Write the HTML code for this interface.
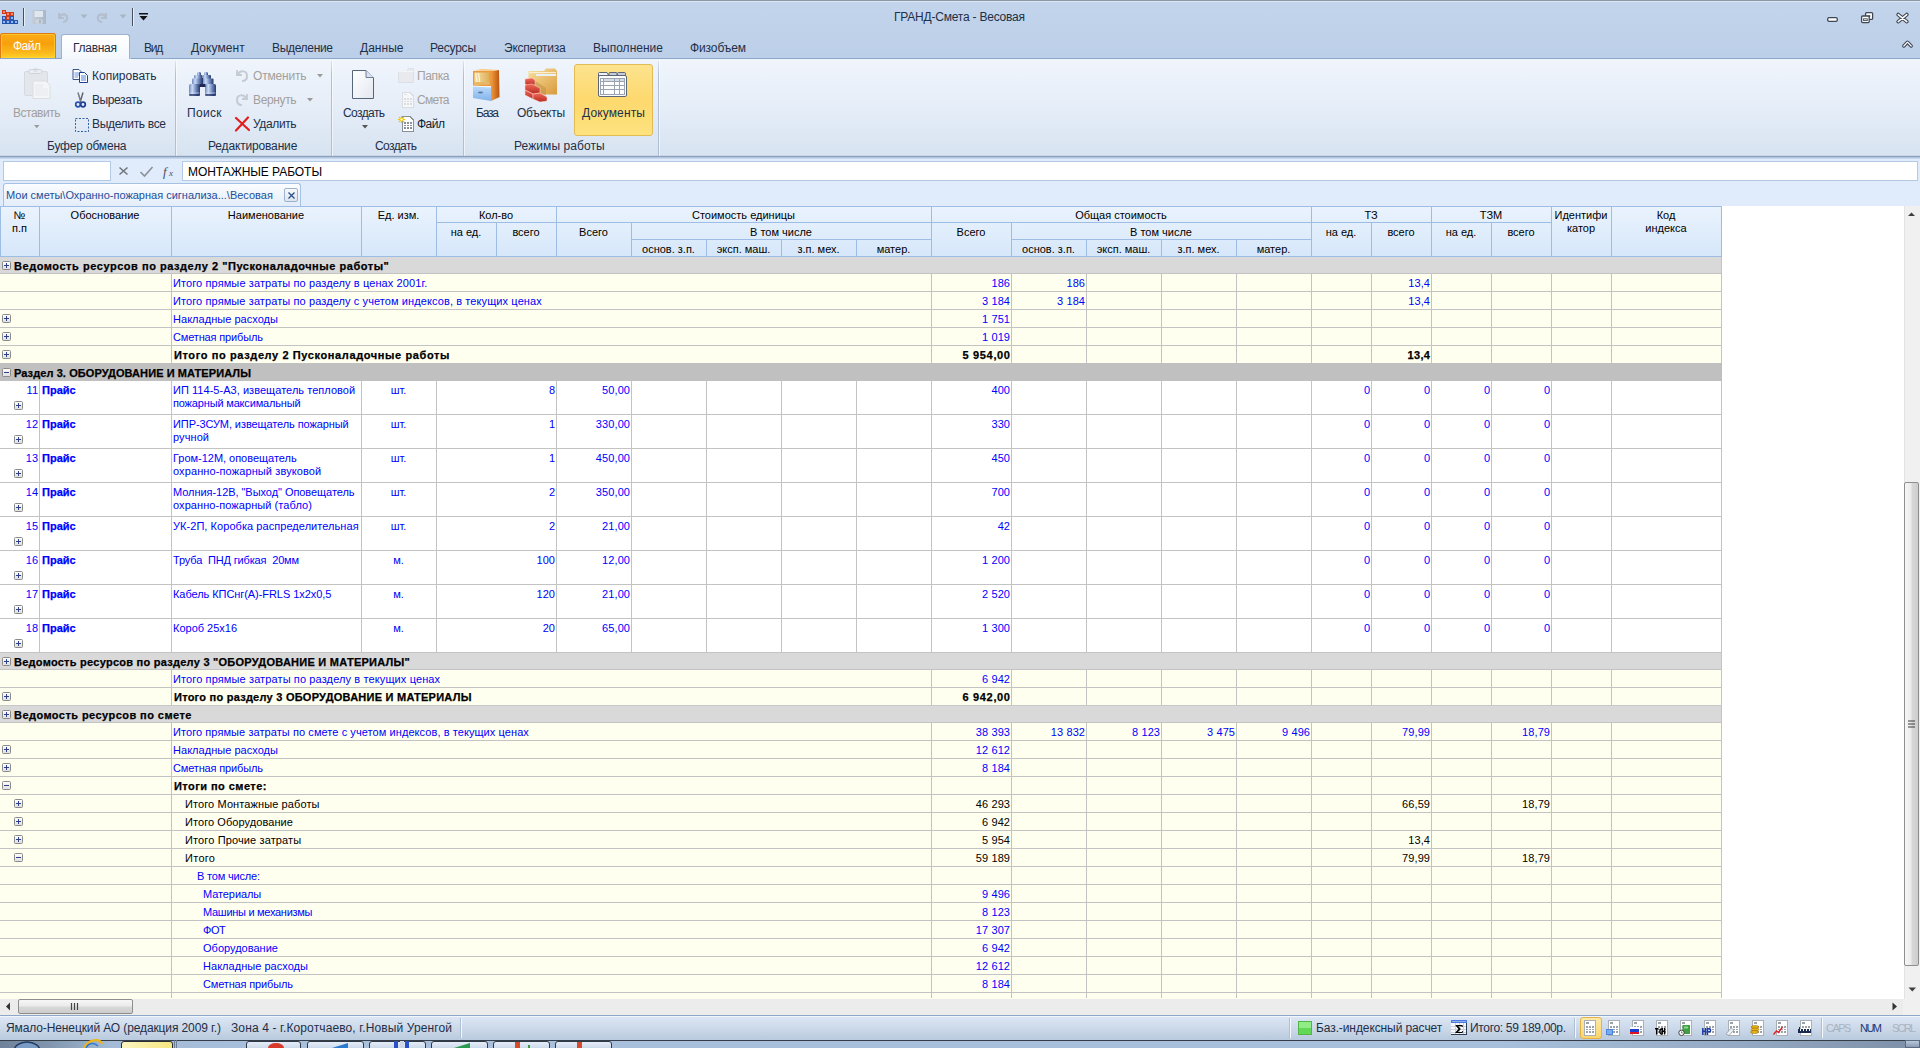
<!DOCTYPE html>
<html><head><meta charset="utf-8"><title>ГРАНД-Смета - Весовая</title>
<style>
html,body{margin:0;padding:0;}
body{width:1920px;height:1048px;position:relative;overflow:hidden;background:#fff;font-family:"Liberation Sans",sans-serif;}
.t{position:absolute;white-space:pre;}
.b{position:absolute;box-sizing:border-box;}
svg.b{overflow:visible;}
</style></head><body>
<div class="b" style="left:0px;top:0px;width:1920px;height:59px;background:linear-gradient(#c3d5ec,#bccfe8);"></div>
<div class="b" style="left:0px;top:0px;width:1920px;height:1px;background:#8d98a6;"></div>
<div class="b" style="left:0px;top:1px;width:1920px;height:1px;background:#dbe6f3;"></div>
<svg class="b" style="left:2px;top:10px" width="17" height="15" viewBox="0 0 17 15"><g shape-rendering="crispEdges"><rect x="0" y="0" width="4" height="4" fill="#d4381a"/><rect x="0.6" y="0.6" width="2.6" height="2.4" fill="#ff8a6a"/><rect x="4" y="2" width="4" height="4" fill="#d4381a"/><rect x="4.6" y="2.6" width="2.6" height="2.4" fill="#ff8a6a"/><rect x="8" y="2" width="4" height="4" fill="#d4381a"/><rect x="8.6" y="2.6" width="2.6" height="2.4" fill="#ff8a6a"/><rect x="4" y="6" width="4" height="4" fill="#d4381a"/><rect x="4.6" y="6.6" width="2.6" height="2.4" fill="#ff8a6a"/><rect x="0" y="6" width="4" height="4" fill="#2a58b0"/><rect x="0.6" y="6.6" width="2.6" height="2.4" fill="#8ab8f8"/><rect x="8" y="6" width="4" height="4" fill="#2a58b0"/><rect x="8.6" y="6.6" width="2.6" height="2.4" fill="#8ab8f8"/><rect x="0" y="10" width="4" height="4" fill="#2a58b0"/><rect x="0.6" y="10.6" width="2.6" height="2.4" fill="#8ab8f8"/><rect x="4" y="10" width="4" height="4" fill="#2a58b0"/><rect x="4.6" y="10.6" width="2.6" height="2.4" fill="#8ab8f8"/><rect x="8" y="10" width="4" height="4" fill="#2a58b0"/><rect x="8.6" y="10.6" width="2.6" height="2.4" fill="#8ab8f8"/><rect x="12" y="10" width="4" height="4" fill="#2a58b0"/><rect x="12.6" y="10.6" width="2.6" height="2.4" fill="#8ab8f8"/><rect x="0" y="13" width="16" height="1.2" fill="#2350a8"/></g></svg>
<div class="b" style="left:23px;top:8px;width:1px;height:18px;background:#4a505a;"></div>
<div class="b" style="left:24px;top:8px;width:1px;height:18px;background:#e8f0f8;"></div>
<svg class="b" style="left:32px;top:10px" width="14" height="14" viewBox="0 0 14 14"><defs><linearGradient id="fl" x1="0" x2="1"><stop offset="0" stop-color="#c3ceda"/><stop offset="1" stop-color="#a9b6c5"/></linearGradient></defs><rect x="0" y="0" width="14" height="14" rx="1" fill="url(#fl)"/><rect x="2.5" y="1" width="8.5" height="6" fill="#dfe7f1"/><rect x="3.5" y="9.5" width="7" height="4" fill="#cdd6e0"/><rect x="7" y="10" width="2" height="3" fill="#a9b6c5"/></svg>
<svg class="b" style="left:56px;top:10px" width="13" height="13" viewBox="0 0 13 13"><path d="M3 3 L3 8 L8 8" fill="none" stroke="#b3bfcc" stroke-width="2"/><path d="M3 8 C5 3, 12 3, 11 9 C10 12, 8 12, 7 12" fill="none" stroke="#b3bfcc" stroke-width="2.2"/></svg>
<svg class="b" style="left:80px;top:14px" width="8" height="5" viewBox="0 0 8 5"><path d="M0.5 0.5 L7.5 0.5 L4 4.5 Z" fill="#a9b6c4"/></svg>
<svg class="b" style="left:96px;top:10px" width="13" height="13" viewBox="0 0 13 13"><path d="M10 3 L10 8 L5 8" fill="none" stroke="#b3bfcc" stroke-width="2"/><path d="M10 8 C8 3, 1 3, 2 9 C3 12, 5 12, 6 12" fill="none" stroke="#b3bfcc" stroke-width="2.2"/></svg>
<svg class="b" style="left:119px;top:14px" width="8" height="5" viewBox="0 0 8 5"><path d="M0.5 0.5 L7.5 0.5 L4 4.5 Z" fill="#a9b6c4"/></svg>
<div class="b" style="left:132px;top:8px;width:1px;height:18px;background:#4a505a;"></div>
<div class="b" style="left:133px;top:8px;width:1px;height:18px;background:#e8f0f8;"></div>
<svg class="b" style="left:139px;top:13px" width="9" height="8" viewBox="0 0 9 8"><rect x="0" y="0" width="9" height="1.5" fill="#111"/><path d="M0.5 3 L8.5 3 L4.5 7.5 Z" fill="#111"/></svg>
<div class="t " style="left:894px;top:10px;font-size:12px;line-height:14px;color:#1e2f48;letter-spacing:-0.214px;">ГРАНД-Смета - Весовая</div>
<svg class="b" style="left:1826px;top:16px" width="13" height="7" viewBox="0 0 13 7"><rect x="1.7" y="1.6" width="9.6" height="3.8" rx="1.4" fill="#fff" stroke="#3f4654" stroke-width="1.3"/></svg>
<svg class="b" style="left:1860px;top:11px" width="15" height="13" viewBox="0 0 15 13"><rect x="5.6" y="1.6" width="7" height="6.8" rx="1" fill="#fff" stroke="#3f4654" stroke-width="1.3"/><rect x="8.2" y="4.2" width="2" height="1.8" fill="#3f4654"/><rect x="1.6" y="5" width="7.6" height="6.6" rx="1" fill="#fff" stroke="#3f4654" stroke-width="1.3"/><rect x="3.6" y="7.8" width="3.6" height="1.8" fill="none" stroke="#3f4654" stroke-width="0.9"/></svg>
<svg class="b" style="left:1895px;top:12px" width="15" height="12" viewBox="0 0 15 12"><path d="M3.2 2.6 L11.8 9.6 M11.8 2.6 L3.2 9.6" stroke="#3f4654" stroke-width="3.8" stroke-linecap="round"/><path d="M3.2 2.6 L11.8 9.6 M11.8 2.6 L3.2 9.6" stroke="#fff" stroke-width="1.5" stroke-linecap="round"/></svg>
<svg class="b" style="left:1902px;top:40px" width="11" height="8" viewBox="0 0 11 8"><path d="M1.8 6 L5.5 2.2 L9.2 6" fill="none" stroke="#3f4654" stroke-width="3.4" stroke-linecap="round" stroke-linejoin="round"/><path d="M1.8 6 L5.5 2.2 L9.2 6" fill="none" stroke="#fff" stroke-width="1.2" stroke-linecap="round" stroke-linejoin="round"/></svg>
<div class="b" style="left:0;top:33px;width:56px;height:26px;border-radius:3px 3px 0 0;background:linear-gradient(#fbae18,#f7a00c 40%,#fab81c 75%,#fdd628);box-shadow:inset 0 0 0 1px #e27a14, inset 0 0 0 2px rgba(255,214,60,0.6);"></div>
<div class="t " style="left:13px;top:39px;font-size:12px;line-height:14px;color:#fff;letter-spacing:-0.5px;">Файл</div>
<div class="b" style="left:61px;top:34px;width:69px;height:26px;border-radius:3px 3px 0 0;background:linear-gradient(#ffffff,#f3f7fc);border:1px solid #9db3cd;border-bottom:none;"></div>
<div class="b" style="left:0px;top:58px;width:61px;height:1px;background:#8ba6c6;"></div>
<div class="b" style="left:131px;top:58px;width:1789px;height:1px;background:#8ba6c6;"></div>
<div class="t " style="left:73px;top:41px;font-size:12px;line-height:14px;color:#1e2f48;letter-spacing:-0.279px;">Главная</div>
<div class="t " style="left:144px;top:41px;font-size:12px;line-height:14px;color:#1e2f48;letter-spacing:-1.227px;">Вид</div>
<div class="t " style="left:191px;top:41px;font-size:12px;line-height:14px;color:#1e2f48;letter-spacing:0.074px;">Документ</div>
<div class="t " style="left:272px;top:41px;font-size:12px;line-height:14px;color:#1e2f48;letter-spacing:-0.322px;">Выделение</div>
<div class="t " style="left:360px;top:41px;font-size:12px;line-height:14px;color:#1e2f48;letter-spacing:0.031px;">Данные</div>
<div class="t " style="left:430px;top:41px;font-size:12px;line-height:14px;color:#1e2f48;letter-spacing:-0.216px;">Ресурсы</div>
<div class="t " style="left:504px;top:41px;font-size:12px;line-height:14px;color:#1e2f48;letter-spacing:-0.247px;">Экспертиза</div>
<div class="t " style="left:593px;top:41px;font-size:12px;line-height:14px;color:#1e2f48;letter-spacing:0.019px;">Выполнение</div>
<div class="t " style="left:690px;top:41px;font-size:12px;line-height:14px;color:#1e2f48;letter-spacing:-0.109px;">Физобъем</div>
<div class="b" style="left:0px;top:59px;width:1920px;height:97px;background:linear-gradient(#f0f5fc,#e8eff9 40%,#d7e3f1);"></div>
<div class="b" style="left:0px;top:155px;width:1920px;height:1px;background:#c9d6e6;"></div>
<div class="b" style="left:0px;top:156px;width:1920px;height:1px;background:#8aa0bc;"></div>
<div class="b" style="left:175px;top:61px;width:1px;height:95px;background:linear-gradient(rgba(170,190,215,0.3),#aebfd6 15%,#aebfd6 100%);"></div>
<div class="b" style="left:176px;top:61px;width:1px;height:95px;background:rgba(255,255,255,0.55);"></div>
<div class="b" style="left:331px;top:61px;width:1px;height:95px;background:linear-gradient(rgba(170,190,215,0.3),#aebfd6 15%,#aebfd6 100%);"></div>
<div class="b" style="left:332px;top:61px;width:1px;height:95px;background:rgba(255,255,255,0.55);"></div>
<div class="b" style="left:463px;top:61px;width:1px;height:95px;background:linear-gradient(rgba(170,190,215,0.3),#aebfd6 15%,#aebfd6 100%);"></div>
<div class="b" style="left:464px;top:61px;width:1px;height:95px;background:rgba(255,255,255,0.55);"></div>
<div class="b" style="left:658px;top:61px;width:1px;height:95px;background:linear-gradient(rgba(170,190,215,0.3),#aebfd6 15%,#aebfd6 100%);"></div>
<div class="b" style="left:659px;top:61px;width:1px;height:95px;background:rgba(255,255,255,0.55);"></div>
<svg class="b" style="left:23px;top:68px" width="28" height="32" viewBox="0 0 28 32"><rect x="1.5" y="3.5" width="23" height="24" rx="1.5" fill="#e3e6eb" stroke="#d6dae0"/><rect x="6" y="1.5" width="13" height="4" rx="1.5" fill="#eceef2" stroke="#cfd4da"/><circle cx="12.5" cy="2" r="1.5" fill="none" stroke="#cfd4da"/><path d="M10 13 H23 L27 17 V30.5 H10 Z" fill="#f4f5f7" stroke="#dadde2"/><path d="M12 17 H20 M12 19 H20 M12 21 H25 M12 23 H25 M12 25 H25 M12 27 H25" stroke="#e2e5ea" stroke-width="0.8"/></svg>
<div class="t " style="left:13px;top:106px;font-size:12px;line-height:14px;color:#a39f9b;letter-spacing:-0.48px;">Вставить</div>
<svg class="b" style="left:34px;top:125px" width="6" height="4" viewBox="0 0 6 4"><path d="M0 0 L5.5 0 L2.75 3.2 Z" fill="#9a9a9a"/></svg>
<svg class="b" style="left:72px;top:69px" width="17" height="14" viewBox="0 0 17 14"><path d="M1 0.5 H7 L9.5 3 V10.5 H1 Z" fill="#fff" stroke="#3b5586"/><path d="M2.5 4 H7.5 M2.5 6 H7.5 M2.5 8 H6" stroke="#5a8ad8" stroke-width="0.9"/><path d="M7.5 3.5 H12.5 L15.5 6.5 V13.5 H7.5 Z" fill="#fff" stroke="#1c3f94"/><path d="M9 7 H14 M9 9 H14 M9 11 H14" stroke="#3a74d8" stroke-width="0.9"/></svg>
<div class="t " style="left:92px;top:69px;font-size:12px;line-height:14px;color:#1e2f48;letter-spacing:-0.01px;">Копировать</div>
<svg class="b" style="left:75px;top:92px" width="11" height="16" viewBox="0 0 11 16"><path d="M3 0.5 L5.8 10 M8 0.5 L5.2 10" stroke="#5c6168" stroke-width="1.4"/><path d="M3.2 1 L5.5 9" stroke="#a8adb4" stroke-width="0.5"/><circle cx="3" cy="12.5" r="2.3" fill="none" stroke="#2a50b8" stroke-width="1.7"/><circle cx="8" cy="12.5" r="2.3" fill="none" stroke="#1f3f98" stroke-width="1.7"/></svg>
<div class="t " style="left:92px;top:93px;font-size:12px;line-height:14px;color:#1e2f48;letter-spacing:-0.408px;">Вырезать</div>
<svg class="b" style="left:75px;top:118px" width="14" height="14" viewBox="0 0 14 14"><rect x="0.5" y="0.5" width="13" height="13" fill="none" stroke="#3060a8" stroke-dasharray="2,1.5"/></svg>
<div class="t " style="left:92px;top:117px;font-size:12px;line-height:14px;color:#1e2f48;letter-spacing:-0.327px;">Выделить все</div>
<div class="t " style="left:47px;top:139px;font-size:12px;line-height:14px;color:#1e2f48;letter-spacing:-0.183px;">Буфер обмена</div>
<svg class="b" style="left:188px;top:71px" width="30" height="27" viewBox="0 0 30 27"><defs><linearGradient id="bn" x1="0" x2="1"><stop offset="0" stop-color="#6f86b6"/><stop offset="0.3" stop-color="#c9daf8"/><stop offset="0.65" stop-color="#6f87bb"/><stop offset="1" stop-color="#26386a"/></linearGradient></defs><g fill="url(#bn)"><rect x="9" y="1" width="4" height="4" rx="1.5"/><rect x="16" y="1" width="4" height="4" rx="1.5"/><rect x="6" y="4" width="8.5" height="4" rx="1"/><rect x="14.5" y="4" width="8.5" height="4" rx="1"/><rect x="4" y="7.4" width="10.5" height="6" rx="1"/><rect x="14.5" y="7.4" width="11" height="6" rx="1"/><rect x="1" y="13" width="11" height="12" rx="1.5"/><rect x="17" y="13" width="11" height="12" rx="1.5"/></g><rect x="11.5" y="13" width="6" height="3" fill="#1c2a55"/><rect x="14" y="7" width="1" height="6" fill="#2c3e70"/><rect x="1.5" y="21.5" width="10" height="1" fill="#d8e4fa" opacity="0.6"/><rect x="17.5" y="21.5" width="10" height="1" fill="#d8e4fa" opacity="0.6"/><rect x="1.5" y="23" width="10" height="2" fill="#1f2f60" opacity="0.7"/><rect x="17.5" y="23" width="10" height="2" fill="#1f2f60" opacity="0.7"/></svg>
<div class="t " style="left:187px;top:106px;font-size:12px;line-height:14px;color:#1e2f48;letter-spacing:0.338px;">Поиск</div>
<svg class="b" style="left:235px;top:68px" width="14" height="14" viewBox="0 0 14 14"><path d="M2 2 V7 H7" fill="none" stroke="#c5cbd3" stroke-width="1.8"/><path d="M2.5 7 C5 2, 12 2, 12 8 C12 11, 10 13, 7 13" fill="none" stroke="#c5cbd3" stroke-width="2"/></svg>
<div class="t " style="left:253px;top:69px;font-size:12px;line-height:14px;color:#a39f9b;letter-spacing:-0.175px;">Отменить</div>
<svg class="b" style="left:317px;top:74px" width="6" height="4" viewBox="0 0 6 4"><path d="M0 0 L6 0 L3 3.5 Z" fill="#9a9a9a"/></svg>
<svg class="b" style="left:235px;top:92px" width="14" height="14" viewBox="0 0 14 14"><path d="M12 2 V7 H7" fill="none" stroke="#c5cbd3" stroke-width="1.8"/><path d="M11.5 7 C9 2, 2 2, 2 8 C2 11, 4 13, 7 13" fill="none" stroke="#c5cbd3" stroke-width="2"/></svg>
<div class="t " style="left:253px;top:93px;font-size:12px;line-height:14px;color:#a39f9b;letter-spacing:-0.353px;">Вернуть</div>
<svg class="b" style="left:307px;top:98px" width="6" height="4" viewBox="0 0 6 4"><path d="M0 0 L6 0 L3 3.5 Z" fill="#9a9a9a"/></svg>
<svg class="b" style="left:234px;top:116px" width="17" height="16" viewBox="0 0 17 16"><path d="M2 2 L15 14 M14 1.5 L2 14.5" stroke="#e02020" stroke-width="2.2" stroke-linecap="round"/></svg>
<div class="t " style="left:253px;top:117px;font-size:12px;line-height:14px;color:#1e2f48;letter-spacing:-0.369px;">Удалить</div>
<div class="t " style="left:208px;top:139px;font-size:12px;line-height:14px;color:#1e2f48;letter-spacing:-0.161px;">Редактирование</div>
<svg class="b" style="left:351px;top:69px" width="24" height="31" viewBox="0 0 24 31"><defs><linearGradient id="pg" x1="0" y1="0" x2="1" y2="1"><stop offset="0" stop-color="#ffffff"/><stop offset="1" stop-color="#e3e8f0"/></linearGradient></defs><path d="M1.5 1.5 H15 L22.5 9 V29.5 H1.5 Z" fill="url(#pg)" stroke="#56657a" stroke-width="1"/><path d="M15 1.5 V8.5 H22.5" fill="#d8e2f2" stroke="#56657a" stroke-width="0.8"/></svg>
<div class="t " style="left:343px;top:106px;font-size:12px;line-height:14px;color:#1e2f48;letter-spacing:-0.582px;">Создать</div>
<svg class="b" style="left:362px;top:125px" width="6" height="4" viewBox="0 0 6 4"><path d="M0 0 L6 0 L3 3.5 Z" fill="#555"/></svg>
<svg class="b" style="left:398px;top:68px" width="16" height="15" viewBox="0 0 16 15"><path d="M0.5 3.5 H9 L10.5 0.5 H15.5 V14.5 H0.5 Z" fill="#e8eaee" stroke="#dcdfe4"/><path d="M0.5 3.5 H15.5" stroke="#f4f5f7"/></svg>
<div class="t " style="left:417px;top:69px;font-size:12px;line-height:14px;color:#a39f9b;letter-spacing:-0.371px;">Папка</div>
<svg class="b" style="left:402px;top:92px" width="12" height="16" viewBox="0 0 12 16"><g shape-rendering="crispEdges"><path d="M0.5 0.5 H8 L11.5 4 V15.5 H0.5 Z" fill="#f6f7f9" stroke="#d9dce1"/><rect x="2" y="2" width="3" height="1" fill="#dcdfe4"/><rect x="2" y="6" width="8" height="7" fill="#d9dce1"/><rect x="4" y="6" width="1" height="7" fill="#f6f7f9"/><rect x="7" y="6" width="1" height="7" fill="#f6f7f9"/><rect x="2" y="8" width="8" height="1" fill="#f6f7f9"/><rect x="2" y="10" width="8" height="1" fill="#f6f7f9"/></g></svg>
<div class="t " style="left:417px;top:93px;font-size:12px;line-height:14px;color:#a39f9b;letter-spacing:-0.684px;">Смета</div>
<svg class="b" style="left:398px;top:116px" width="17" height="17" viewBox="0 0 17 17"><g shape-rendering="crispEdges"><path d="M4.5 0.5 H12 L15.5 4 V15.5 H4.5 Z" fill="#fff" stroke="#8a9099"/><rect x="6" y="6" width="8" height="7" fill="#8a9099"/><rect x="8" y="6" width="1" height="7" fill="#fff"/><rect x="11" y="6" width="1" height="7" fill="#fff"/><rect x="6" y="8" width="8" height="1" fill="#fff"/><rect x="6" y="10" width="8" height="1" fill="#fff"/></g><path d="M3.5 0 V7 M0 3.5 H7 M1 1 L6 6 M6 1 L1 6" stroke="#f2c200" stroke-width="1.1"/><circle cx="3.5" cy="3.5" r="1.2" fill="#fff8c0"/></svg>
<div class="t " style="left:417px;top:117px;font-size:12px;line-height:14px;color:#101c30;letter-spacing:-0.5px;">Файл</div>
<div class="t " style="left:375px;top:139px;font-size:12px;line-height:14px;color:#1e2f48;letter-spacing:-0.582px;">Создать</div>
<svg class="b" style="left:472px;top:68px" width="32" height="34" viewBox="0 0 32 34"><defs><linearGradient id="or" x1="0" x2="1"><stop offset="0" stop-color="#f29a3c"/><stop offset="1" stop-color="#b9560e"/></linearGradient><linearGradient id="bl" x1="0" y1="0" x2="0" y2="1"><stop offset="0" stop-color="#b9dbfb"/><stop offset="1" stop-color="#82b2ea"/></linearGradient><linearGradient id="pp" x1="0" x2="1"><stop offset="0" stop-color="#f7e3a8"/><stop offset="1" stop-color="#dcae5a"/></linearGradient></defs><path d="M19 3 L27 2 L27.5 29 L19 33 Z" fill="url(#or)"/><path d="M27 29.5 L31 28 L19 33.5 Z" fill="#9aa6b8" opacity="0.5"/><path d="M1 2.5 L19 3 L27 2 L10 1 Z" fill="#f8c880"/><rect x="1" y="3" width="18" height="15" fill="#ec9a3e"/><rect x="2.5" y="4.5" width="15" height="12" fill="url(#pp)"/><path d="M3.5 5 L5.5 16 M6.5 5 L8 16" stroke="#fff6d8" stroke-width="1.2"/><rect x="2.5" y="14" width="15" height="2.5" fill="#e8b868"/><path d="M1 18 L19 19 L19 33 L1 30 Z" fill="url(#bl)"/><path d="M1 18 L19 19" stroke="#fff" stroke-width="0.8"/><ellipse cx="8.5" cy="24.5" rx="2.6" ry="1.1" fill="#5c7aa8"/></svg>
<div class="t " style="left:476px;top:106px;font-size:12px;line-height:14px;color:#1e2f48;letter-spacing:-1.193px;">База</div>
<svg class="b" style="left:524px;top:68px" width="34" height="34" viewBox="0 0 34 34"><defs><linearGradient id="fd" x1="0" y1="0" x2="1" y2="1"><stop offset="0" stop-color="#f9e1a0"/><stop offset="1" stop-color="#d99a3c"/></linearGradient><linearGradient id="brk" x1="0" y1="0" x2="0" y2="1"><stop offset="0" stop-color="#f06a5a"/><stop offset="1" stop-color="#b82a22"/></linearGradient></defs><path d="M4.5 3 H20 L22 0.5 H31 L33 3 V26.5 H4.5 Z" fill="url(#fd)"/><path d="M5.5 4 H32 V5.2 H5.5 Z" fill="#fff8e4" opacity="0.8"/><path d="M12 6 H32 V8 H12 Z" fill="#e8f0f8"/><path d="M10 12 L22 20 L22 28 L10 22 Z" fill="#b07830" opacity="0.35"/><g fill="url(#brk)" stroke="#ffd8d0" stroke-width="0.5"><path d="M1 11 L8 10 L11 12 L11 17 L4 18 L1 16 Z"/><path d="M1 17 L8 16 L16 20 L16 25 L9 26 L1 22 Z"/><path d="M1 22 L9 26 L9 31 L1 27 Z"/><path d="M9 26 L16 25 L23 29 L23 33 L16 34 L9 31 Z"/></g></svg>
<div class="t " style="left:517px;top:106px;font-size:12px;line-height:14px;color:#1e2f48;letter-spacing:-0.217px;">Объекты</div>
<div class="b" style="left:574px;top:64px;width:79px;height:72px;border:1px solid #e3bb55;border-radius:3px;background:linear-gradient(#fde38e,#fdd96e 50%,#fde27e);"></div>
<svg class="b" style="left:597px;top:71px" width="32" height="28" viewBox="0 0 32 28"><path d="M1.5 6 V2.5 Q1.5 1.5 2.5 1.5 H10 L12 5 Z" fill="#eef1f5" stroke="#5c6678"/><rect x="12" y="1.5" width="8" height="3.5" rx="1" fill="#c5ccd8" stroke="#5c6678"/><rect x="20.5" y="1.5" width="8" height="3.5" rx="1" fill="#c5ccd8" stroke="#5c6678"/><rect x="1.5" y="4.5" width="28" height="21" rx="1.5" fill="#fdfdfe" stroke="#5c6678"/><g shape-rendering="crispEdges" stroke="#9aa3b0" fill="none"><rect x="3.5" y="7.5" width="24" height="16"/><path d="M3.5 10.5 H27.5 M3.5 14.5 H27.5 M3.5 18.5 H27.5 M6.5 7.5 V23.5 M17.5 7.5 V23.5 M22.5 7.5 V23.5"/></g><rect x="7" y="8" width="10" height="2" fill="#d6dce6"/><rect x="18" y="8" width="4" height="2" fill="#d6dce6"/><rect x="23" y="8" width="4" height="2" fill="#d6dce6"/></svg>
<div class="t " style="left:582px;top:106px;font-size:12px;line-height:14px;color:#1e2f48;letter-spacing:0.13px;">Документы</div>
<div class="t " style="left:514px;top:139px;font-size:12px;line-height:14px;color:#1e2f48;letter-spacing:0.076px;">Режимы работы</div>
<div class="b" style="left:0px;top:157px;width:1920px;height:26px;background:#e0ecfb;"></div>
<div class="b" style="left:0px;top:157px;width:1920px;height:1px;background:#b3c6dd;"></div>
<div class="b" style="left:0px;top:158px;width:1920px;height:1px;background:#c8d8ec;"></div>
<div class="b" style="left:3px;top:161px;width:108px;height:20px;background:#fff;border:1px solid #b3c9e4;"></div>
<svg class="b" style="left:118px;top:166px" width="11" height="10" viewBox="0 0 11 10"><path d="M1.5 1.5 L9.5 8.5 M9.5 1.5 L1.5 8.5" stroke="#6d737b" stroke-width="1.5"/></svg>
<svg class="b" style="left:139px;top:165px" width="15" height="13" viewBox="0 0 15 13"><path d="M1.5 7 L5.5 11 L13.5 2" fill="none" stroke="#8c9198" stroke-width="1.6"/></svg>
<div class="t " style="left:163px;top:165px;font-size:13px;line-height:14px;color:#4a5058;font-family:'Liberation Serif',serif;font-style:italic;">f</div>
<div class="t " style="left:169px;top:167px;font-size:9px;line-height:13px;color:#4a5058;font-family:'Liberation Serif',serif;font-style:italic;">x</div>
<div class="b" style="left:182px;top:161px;width:1736px;height:20px;background:#fff;border:1px solid #b3c9e4;"></div>
<div class="t " style="left:188px;top:165px;font-size:12px;line-height:14px;color:#000;letter-spacing:-0.057px;">МОНТАЖНЫЕ РАБОТЫ</div>
<div class="b" style="left:0px;top:183px;width:1920px;height:23px;background:#e0ecfb;"></div>
<div class="b" style="left:3px;top:183px;width:298px;height:23px;border:1px solid #a5c1e3;border-bottom:none;border-radius:3px 3px 0 0;background:linear-gradient(#fbfdff,#e3edf9);"></div>
<div class="t " style="left:6px;top:189px;font-size:11px;line-height:13px;color:#1d4f9a;letter-spacing:-0.004px;">Мои сметы\Охранно-пожарная сигнализа...\Весовая</div>
<div class="b" style="left:284px;top:188px;width:14px;height:14px;border:1px solid #9cb2cd;border-radius:2px;background:linear-gradient(#f6f9fd,#dbe5f1);"></div>
<svg class="b" style="left:286px;top:190px" width="11" height="11" viewBox="0 0 11 11"><path d="M2.5 2.5 L8.5 8.5 M8.5 2.5 L2.5 8.5" stroke="#2b4f86" stroke-width="1.3"/></svg>
<div class="b" style="left:0px;top:206px;width:1904px;height:793px;background:#fff;"></div>
<div class="b" style="left:0px;top:206px;width:1722px;height:51px;background:linear-gradient(#eaf3fd,#d6e7fa);"></div>
<div class="b" style="left:0px;top:206px;width:1722px;height:1px;background:#9ebde4;"></div>
<div class="b" style="left:0px;top:256px;width:1722px;height:1px;background:#9ebde4;"></div>
<div class="b" style="left:0px;top:206px;width:1px;height:51px;background:#9ebde4;"></div>
<div class="b" style="left:39px;top:206px;width:1px;height:51px;background:#9ebde4;"></div>
<div class="b" style="left:171px;top:206px;width:1px;height:51px;background:#9ebde4;"></div>
<div class="b" style="left:361px;top:206px;width:1px;height:51px;background:#9ebde4;"></div>
<div class="b" style="left:436px;top:206px;width:1px;height:51px;background:#9ebde4;"></div>
<div class="b" style="left:556px;top:206px;width:1px;height:51px;background:#9ebde4;"></div>
<div class="b" style="left:931px;top:206px;width:1px;height:51px;background:#9ebde4;"></div>
<div class="b" style="left:1311px;top:206px;width:1px;height:51px;background:#9ebde4;"></div>
<div class="b" style="left:1431px;top:206px;width:1px;height:51px;background:#9ebde4;"></div>
<div class="b" style="left:1551px;top:206px;width:1px;height:51px;background:#9ebde4;"></div>
<div class="b" style="left:1611px;top:206px;width:1px;height:51px;background:#9ebde4;"></div>
<div class="b" style="left:1721px;top:206px;width:1px;height:51px;background:#9ebde4;"></div>
<div class="b" style="left:496px;top:222px;width:1px;height:35px;background:#9ebde4;"></div>
<div class="b" style="left:631px;top:222px;width:1px;height:35px;background:#9ebde4;"></div>
<div class="b" style="left:1011px;top:222px;width:1px;height:35px;background:#9ebde4;"></div>
<div class="b" style="left:1371px;top:222px;width:1px;height:35px;background:#9ebde4;"></div>
<div class="b" style="left:1491px;top:222px;width:1px;height:35px;background:#9ebde4;"></div>
<div class="b" style="left:706px;top:239px;width:1px;height:18px;background:#9ebde4;"></div>
<div class="b" style="left:781px;top:239px;width:1px;height:18px;background:#9ebde4;"></div>
<div class="b" style="left:856px;top:239px;width:1px;height:18px;background:#9ebde4;"></div>
<div class="b" style="left:1086px;top:239px;width:1px;height:18px;background:#9ebde4;"></div>
<div class="b" style="left:1161px;top:239px;width:1px;height:18px;background:#9ebde4;"></div>
<div class="b" style="left:1236px;top:239px;width:1px;height:18px;background:#9ebde4;"></div>
<div class="b" style="left:436px;top:222px;width:1115px;height:1px;background:#9ebde4;"></div>
<div class="b" style="left:631px;top:239px;width:300px;height:1px;background:#9ebde4;"></div>
<div class="b" style="left:1011px;top:239px;width:300px;height:1px;background:#9ebde4;"></div>
<div class="t" style="left:-180.5px;width:400px;text-align:center;top:209px;font-size:11px;line-height:13px;color:#000;">№</div>
<div class="t" style="left:-180.5px;width:400px;text-align:center;top:222px;font-size:11px;line-height:13px;color:#000;">п.п</div>
<div class="t" style="left:-95px;width:400px;text-align:center;top:209px;font-size:11px;line-height:13px;color:#000;">Обоснование</div>
<div class="t" style="left:66px;width:400px;text-align:center;top:209px;font-size:11px;line-height:13px;color:#000;">Наименование</div>
<div class="t" style="left:198.5px;width:400px;text-align:center;top:209px;font-size:11px;line-height:13px;color:#000;">Ед. изм.</div>
<div class="t" style="left:296px;width:400px;text-align:center;top:209px;font-size:11px;line-height:13px;color:#000;">Кол-во</div>
<div class="t" style="left:266px;width:400px;text-align:center;top:226px;font-size:11px;line-height:13px;color:#000;">на ед.</div>
<div class="t" style="left:326px;width:400px;text-align:center;top:226px;font-size:11px;line-height:13px;color:#000;">всего</div>
<div class="t" style="left:543.5px;width:400px;text-align:center;top:209px;font-size:11px;line-height:13px;color:#000;">Стоимость единицы</div>
<div class="t" style="left:393.5px;width:400px;text-align:center;top:226px;font-size:11px;line-height:13px;color:#000;">Всего</div>
<div class="t" style="left:581px;width:400px;text-align:center;top:226px;font-size:11px;line-height:13px;color:#000;">В том числе</div>
<div class="t" style="left:468.5px;width:400px;text-align:center;top:243px;font-size:11px;line-height:13px;color:#000;">основ. з.п.</div>
<div class="t" style="left:543.5px;width:400px;text-align:center;top:243px;font-size:11px;line-height:13px;color:#000;">эксп. маш.</div>
<div class="t" style="left:618.5px;width:400px;text-align:center;top:243px;font-size:11px;line-height:13px;color:#000;">з.п. мех.</div>
<div class="t" style="left:693.5px;width:400px;text-align:center;top:243px;font-size:11px;line-height:13px;color:#000;">матер.</div>
<div class="t" style="left:921px;width:400px;text-align:center;top:209px;font-size:11px;line-height:13px;color:#000;">Общая стоимость</div>
<div class="t" style="left:771px;width:400px;text-align:center;top:226px;font-size:11px;line-height:13px;color:#000;">Всего</div>
<div class="t" style="left:961px;width:400px;text-align:center;top:226px;font-size:11px;line-height:13px;color:#000;">В том числе</div>
<div class="t" style="left:848.5px;width:400px;text-align:center;top:243px;font-size:11px;line-height:13px;color:#000;">основ. з.п.</div>
<div class="t" style="left:923.5px;width:400px;text-align:center;top:243px;font-size:11px;line-height:13px;color:#000;">эксп. маш.</div>
<div class="t" style="left:998.5px;width:400px;text-align:center;top:243px;font-size:11px;line-height:13px;color:#000;">з.п. мех.</div>
<div class="t" style="left:1073.5px;width:400px;text-align:center;top:243px;font-size:11px;line-height:13px;color:#000;">матер.</div>
<div class="t" style="left:1171px;width:400px;text-align:center;top:209px;font-size:11px;line-height:13px;color:#000;">ТЗ</div>
<div class="t" style="left:1141px;width:400px;text-align:center;top:226px;font-size:11px;line-height:13px;color:#000;">на ед.</div>
<div class="t" style="left:1201px;width:400px;text-align:center;top:226px;font-size:11px;line-height:13px;color:#000;">всего</div>
<div class="t" style="left:1291px;width:400px;text-align:center;top:209px;font-size:11px;line-height:13px;color:#000;">ТЗМ</div>
<div class="t" style="left:1261px;width:400px;text-align:center;top:226px;font-size:11px;line-height:13px;color:#000;">на ед.</div>
<div class="t" style="left:1321px;width:400px;text-align:center;top:226px;font-size:11px;line-height:13px;color:#000;">всего</div>
<div class="t" style="left:1381px;width:400px;text-align:center;top:209px;font-size:11px;line-height:13px;color:#000;">Идентифи</div>
<div class="t" style="left:1381px;width:400px;text-align:center;top:222px;font-size:11px;line-height:13px;color:#000;">катор</div>
<div class="t" style="left:1466px;width:400px;text-align:center;top:209px;font-size:11px;line-height:13px;color:#000;">Код</div>
<div class="t" style="left:1466px;width:400px;text-align:center;top:222px;font-size:11px;line-height:13px;color:#000;">индекса</div>
<div class="b" style="left:0px;top:257px;width:1722px;height:17px;background:#d9d9d9;"></div>
<div class="b" style="left:0px;top:273px;width:1722px;height:1px;background:#c3c3c3;"></div>
<div class="b" style="left:1721px;top:257px;width:1px;height:17px;background:#c3c3c3;"></div>
<svg class="b" style="left:2px;top:261px" width="9" height="9" viewBox="0 0 9 9"><defs><linearGradient id="pbx" x1="0" y1="0" x2="0" y2="1"><stop offset="0" stop-color="#ffffff"/><stop offset="1" stop-color="#dedede"/></linearGradient></defs><rect x="0.5" y="0.5" width="8" height="8" rx="1" fill="url(#pbx)" stroke="#8a8a8a"/><path d="M2 4.5 H7" stroke="#2c3e8c" stroke-width="1"/><path d="M4.5 2 V7" stroke="#2c3e8c" stroke-width="1"/></svg>
<div class="t " style="left:14px;top:260px;font-size:11px;line-height:13px;color:#000;font-weight:700;-webkit-text-stroke:0.25px;letter-spacing:0.543px;">Ведомость ресурсов по разделу 2 "Пусконаладочные работы"</div>
<div class="b" style="left:0px;top:274px;width:1722px;height:18px;background:#fffff0;"></div>
<div class="b" style="left:0px;top:291px;width:1722px;height:1px;background:#c3c3c3;"></div>
<div class="b" style="left:171px;top:274px;width:1px;height:18px;background:#c3c3c3;"></div>
<div class="b" style="left:931px;top:274px;width:1px;height:18px;background:#c3c3c3;"></div>
<div class="b" style="left:1011px;top:274px;width:1px;height:18px;background:#c3c3c3;"></div>
<div class="b" style="left:1086px;top:274px;width:1px;height:18px;background:#c3c3c3;"></div>
<div class="b" style="left:1161px;top:274px;width:1px;height:18px;background:#c3c3c3;"></div>
<div class="b" style="left:1236px;top:274px;width:1px;height:18px;background:#c3c3c3;"></div>
<div class="b" style="left:1311px;top:274px;width:1px;height:18px;background:#c3c3c3;"></div>
<div class="b" style="left:1371px;top:274px;width:1px;height:18px;background:#c3c3c3;"></div>
<div class="b" style="left:1431px;top:274px;width:1px;height:18px;background:#c3c3c3;"></div>
<div class="b" style="left:1491px;top:274px;width:1px;height:18px;background:#c3c3c3;"></div>
<div class="b" style="left:1551px;top:274px;width:1px;height:18px;background:#c3c3c3;"></div>
<div class="b" style="left:1611px;top:274px;width:1px;height:18px;background:#c3c3c3;"></div>
<div class="b" style="left:1721px;top:274px;width:1px;height:18px;background:#c3c3c3;"></div>
<div class="t " style="left:173px;top:277px;font-size:11px;line-height:13px;color:#0000ff;letter-spacing:0.102px;">Итого прямые затраты по разделу в ценах 2001г.</div>
<div class="t" style="left:710.1px;width:300px;text-align:right;top:277px;font-size:11px;line-height:13px;color:#0000ff;letter-spacing:0.1px;">186</div>
<div class="t" style="left:785.1px;width:300px;text-align:right;top:277px;font-size:11px;line-height:13px;color:#0000ff;letter-spacing:0.1px;">186</div>
<div class="t" style="left:1130.1px;width:300px;text-align:right;top:277px;font-size:11px;line-height:13px;color:#0000ff;letter-spacing:0.1px;">13,4</div>
<div class="b" style="left:0px;top:292px;width:1722px;height:18px;background:#fffff0;"></div>
<div class="b" style="left:0px;top:309px;width:1722px;height:1px;background:#c3c3c3;"></div>
<div class="b" style="left:171px;top:292px;width:1px;height:18px;background:#c3c3c3;"></div>
<div class="b" style="left:931px;top:292px;width:1px;height:18px;background:#c3c3c3;"></div>
<div class="b" style="left:1011px;top:292px;width:1px;height:18px;background:#c3c3c3;"></div>
<div class="b" style="left:1086px;top:292px;width:1px;height:18px;background:#c3c3c3;"></div>
<div class="b" style="left:1161px;top:292px;width:1px;height:18px;background:#c3c3c3;"></div>
<div class="b" style="left:1236px;top:292px;width:1px;height:18px;background:#c3c3c3;"></div>
<div class="b" style="left:1311px;top:292px;width:1px;height:18px;background:#c3c3c3;"></div>
<div class="b" style="left:1371px;top:292px;width:1px;height:18px;background:#c3c3c3;"></div>
<div class="b" style="left:1431px;top:292px;width:1px;height:18px;background:#c3c3c3;"></div>
<div class="b" style="left:1491px;top:292px;width:1px;height:18px;background:#c3c3c3;"></div>
<div class="b" style="left:1551px;top:292px;width:1px;height:18px;background:#c3c3c3;"></div>
<div class="b" style="left:1611px;top:292px;width:1px;height:18px;background:#c3c3c3;"></div>
<div class="b" style="left:1721px;top:292px;width:1px;height:18px;background:#c3c3c3;"></div>
<div class="t " style="left:173px;top:295px;font-size:11px;line-height:13px;color:#0000ff;letter-spacing:0.1px;">Итого прямые затраты по разделу с учетом индексов, в текущих ценах</div>
<div class="t" style="left:710.1px;width:300px;text-align:right;top:295px;font-size:11px;line-height:13px;color:#0000ff;letter-spacing:0.1px;">3 184</div>
<div class="t" style="left:785.1px;width:300px;text-align:right;top:295px;font-size:11px;line-height:13px;color:#0000ff;letter-spacing:0.1px;">3 184</div>
<div class="t" style="left:1130.1px;width:300px;text-align:right;top:295px;font-size:11px;line-height:13px;color:#0000ff;letter-spacing:0.1px;">13,4</div>
<div class="b" style="left:0px;top:310px;width:1722px;height:18px;background:#fffff0;"></div>
<div class="b" style="left:0px;top:327px;width:1722px;height:1px;background:#c3c3c3;"></div>
<div class="b" style="left:171px;top:310px;width:1px;height:18px;background:#c3c3c3;"></div>
<div class="b" style="left:931px;top:310px;width:1px;height:18px;background:#c3c3c3;"></div>
<div class="b" style="left:1011px;top:310px;width:1px;height:18px;background:#c3c3c3;"></div>
<div class="b" style="left:1086px;top:310px;width:1px;height:18px;background:#c3c3c3;"></div>
<div class="b" style="left:1161px;top:310px;width:1px;height:18px;background:#c3c3c3;"></div>
<div class="b" style="left:1236px;top:310px;width:1px;height:18px;background:#c3c3c3;"></div>
<div class="b" style="left:1311px;top:310px;width:1px;height:18px;background:#c3c3c3;"></div>
<div class="b" style="left:1371px;top:310px;width:1px;height:18px;background:#c3c3c3;"></div>
<div class="b" style="left:1431px;top:310px;width:1px;height:18px;background:#c3c3c3;"></div>
<div class="b" style="left:1491px;top:310px;width:1px;height:18px;background:#c3c3c3;"></div>
<div class="b" style="left:1551px;top:310px;width:1px;height:18px;background:#c3c3c3;"></div>
<div class="b" style="left:1611px;top:310px;width:1px;height:18px;background:#c3c3c3;"></div>
<div class="b" style="left:1721px;top:310px;width:1px;height:18px;background:#c3c3c3;"></div>
<svg class="b" style="left:2px;top:314px" width="9" height="9" viewBox="0 0 9 9"><defs><linearGradient id="pbx" x1="0" y1="0" x2="0" y2="1"><stop offset="0" stop-color="#ffffff"/><stop offset="1" stop-color="#dedede"/></linearGradient></defs><rect x="0.5" y="0.5" width="8" height="8" rx="1" fill="url(#pbx)" stroke="#8a8a8a"/><path d="M2 4.5 H7" stroke="#2c3e8c" stroke-width="1"/><path d="M4.5 2 V7" stroke="#2c3e8c" stroke-width="1"/></svg>
<div class="t " style="left:173px;top:313px;font-size:11px;line-height:13px;color:#0000ff;letter-spacing:0.032px;">Накладные расходы</div>
<div class="t" style="left:710.1px;width:300px;text-align:right;top:313px;font-size:11px;line-height:13px;color:#0000ff;letter-spacing:0.1px;">1 751</div>
<div class="b" style="left:0px;top:328px;width:1722px;height:18px;background:#fffff0;"></div>
<div class="b" style="left:0px;top:345px;width:1722px;height:1px;background:#c3c3c3;"></div>
<div class="b" style="left:171px;top:328px;width:1px;height:18px;background:#c3c3c3;"></div>
<div class="b" style="left:931px;top:328px;width:1px;height:18px;background:#c3c3c3;"></div>
<div class="b" style="left:1011px;top:328px;width:1px;height:18px;background:#c3c3c3;"></div>
<div class="b" style="left:1086px;top:328px;width:1px;height:18px;background:#c3c3c3;"></div>
<div class="b" style="left:1161px;top:328px;width:1px;height:18px;background:#c3c3c3;"></div>
<div class="b" style="left:1236px;top:328px;width:1px;height:18px;background:#c3c3c3;"></div>
<div class="b" style="left:1311px;top:328px;width:1px;height:18px;background:#c3c3c3;"></div>
<div class="b" style="left:1371px;top:328px;width:1px;height:18px;background:#c3c3c3;"></div>
<div class="b" style="left:1431px;top:328px;width:1px;height:18px;background:#c3c3c3;"></div>
<div class="b" style="left:1491px;top:328px;width:1px;height:18px;background:#c3c3c3;"></div>
<div class="b" style="left:1551px;top:328px;width:1px;height:18px;background:#c3c3c3;"></div>
<div class="b" style="left:1611px;top:328px;width:1px;height:18px;background:#c3c3c3;"></div>
<div class="b" style="left:1721px;top:328px;width:1px;height:18px;background:#c3c3c3;"></div>
<svg class="b" style="left:2px;top:332px" width="9" height="9" viewBox="0 0 9 9"><defs><linearGradient id="pbx" x1="0" y1="0" x2="0" y2="1"><stop offset="0" stop-color="#ffffff"/><stop offset="1" stop-color="#dedede"/></linearGradient></defs><rect x="0.5" y="0.5" width="8" height="8" rx="1" fill="url(#pbx)" stroke="#8a8a8a"/><path d="M2 4.5 H7" stroke="#2c3e8c" stroke-width="1"/><path d="M4.5 2 V7" stroke="#2c3e8c" stroke-width="1"/></svg>
<div class="t " style="left:173px;top:331px;font-size:11px;line-height:13px;color:#0000ff;letter-spacing:-0.15px;">Сметная прибыль</div>
<div class="t" style="left:710.1px;width:300px;text-align:right;top:331px;font-size:11px;line-height:13px;color:#0000ff;letter-spacing:0.1px;">1 019</div>
<div class="b" style="left:0px;top:346px;width:1722px;height:18px;background:#fffff0;"></div>
<div class="b" style="left:0px;top:363px;width:1722px;height:1px;background:#c3c3c3;"></div>
<div class="b" style="left:171px;top:346px;width:1px;height:18px;background:#c3c3c3;"></div>
<div class="b" style="left:931px;top:346px;width:1px;height:18px;background:#c3c3c3;"></div>
<div class="b" style="left:1011px;top:346px;width:1px;height:18px;background:#c3c3c3;"></div>
<div class="b" style="left:1086px;top:346px;width:1px;height:18px;background:#c3c3c3;"></div>
<div class="b" style="left:1161px;top:346px;width:1px;height:18px;background:#c3c3c3;"></div>
<div class="b" style="left:1236px;top:346px;width:1px;height:18px;background:#c3c3c3;"></div>
<div class="b" style="left:1311px;top:346px;width:1px;height:18px;background:#c3c3c3;"></div>
<div class="b" style="left:1371px;top:346px;width:1px;height:18px;background:#c3c3c3;"></div>
<div class="b" style="left:1431px;top:346px;width:1px;height:18px;background:#c3c3c3;"></div>
<div class="b" style="left:1491px;top:346px;width:1px;height:18px;background:#c3c3c3;"></div>
<div class="b" style="left:1551px;top:346px;width:1px;height:18px;background:#c3c3c3;"></div>
<div class="b" style="left:1611px;top:346px;width:1px;height:18px;background:#c3c3c3;"></div>
<div class="b" style="left:1721px;top:346px;width:1px;height:18px;background:#c3c3c3;"></div>
<svg class="b" style="left:2px;top:350px" width="9" height="9" viewBox="0 0 9 9"><defs><linearGradient id="pbx" x1="0" y1="0" x2="0" y2="1"><stop offset="0" stop-color="#ffffff"/><stop offset="1" stop-color="#dedede"/></linearGradient></defs><rect x="0.5" y="0.5" width="8" height="8" rx="1" fill="url(#pbx)" stroke="#8a8a8a"/><path d="M2 4.5 H7" stroke="#2c3e8c" stroke-width="1"/><path d="M4.5 2 V7" stroke="#2c3e8c" stroke-width="1"/></svg>
<div class="t " style="left:174px;top:349px;font-size:11px;line-height:13px;color:#000;font-weight:700;-webkit-text-stroke:0.25px;letter-spacing:0.612px;">Итого по разделу 2 Пусконаладочные работы</div>
<div class="t" style="left:710.65px;width:300px;text-align:right;top:349px;font-size:11px;line-height:13px;color:#000;font-weight:700;-webkit-text-stroke:0.25px;letter-spacing:0.65px;">5 954,00</div>
<div class="t" style="left:1130.35px;width:300px;text-align:right;top:349px;font-size:11px;line-height:13px;color:#000;font-weight:700;-webkit-text-stroke:0.25px;letter-spacing:0.35px;">13,4</div>
<div class="b" style="left:0px;top:363px;width:1722px;height:17px;background:#c0c0c0;"></div>
<div class="b" style="left:0px;top:379px;width:1722px;height:1px;background:#c3c3c3;"></div>
<div class="b" style="left:1721px;top:363px;width:1px;height:17px;background:#c3c3c3;"></div>
<svg class="b" style="left:2px;top:367px" width="9" height="9" viewBox="0 0 9 9"><defs><linearGradient id="pbx" x1="0" y1="0" x2="0" y2="1"><stop offset="0" stop-color="#ffffff"/><stop offset="1" stop-color="#dedede"/></linearGradient></defs><rect x="0.5" y="0.5" width="8" height="8" rx="1" fill="url(#pbx)" stroke="#8a8a8a"/><path d="M2 4.5 H7" stroke="#2c3e8c" stroke-width="1"/></svg>
<div class="t " style="left:14px;top:366px;font-size:11px;line-height:13px;color:#000;font-weight:700;-webkit-text-stroke:0.25px;letter-spacing:0.084px;">Раздел 3. ОБОРУДОВАНИЕ И МАТЕРИАЛЫ</div>
<div class="b" style="left:0px;top:363px;width:1722px;height:18px;background:#c0c0c0;"></div>
<div class="b" style="left:1721px;top:363px;width:1px;height:18px;background:#bdbdbd;"></div>
<svg class="b" style="left:2px;top:368px" width="9" height="9" viewBox="0 0 9 9"><defs><linearGradient id="pbx" x1="0" y1="0" x2="0" y2="1"><stop offset="0" stop-color="#ffffff"/><stop offset="1" stop-color="#dedede"/></linearGradient></defs><rect x="0.5" y="0.5" width="8" height="8" rx="1" fill="url(#pbx)" stroke="#8a8a8a"/><path d="M2 4.5 H7" stroke="#2c3e8c" stroke-width="1"/></svg>
<div class="t " style="left:14px;top:367px;font-size:11px;line-height:13px;color:#000;font-weight:700;-webkit-text-stroke:0.25px;letter-spacing:0.084px;">Раздел 3. ОБОРУДОВАНИЕ И МАТЕРИАЛЫ</div>
<div class="b" style="left:0px;top:381px;width:1722px;height:34px;background:#fff;"></div>
<div class="b" style="left:0px;top:414px;width:1722px;height:1px;background:#c3c3c3;"></div>
<div class="b" style="left:39px;top:381px;width:1px;height:34px;background:#c3c3c3;"></div>
<div class="b" style="left:171px;top:381px;width:1px;height:34px;background:#c3c3c3;"></div>
<div class="b" style="left:361px;top:381px;width:1px;height:34px;background:#c3c3c3;"></div>
<div class="b" style="left:436px;top:381px;width:1px;height:34px;background:#c3c3c3;"></div>
<div class="b" style="left:556px;top:381px;width:1px;height:34px;background:#c3c3c3;"></div>
<div class="b" style="left:631px;top:381px;width:1px;height:34px;background:#c3c3c3;"></div>
<div class="b" style="left:706px;top:381px;width:1px;height:34px;background:#c3c3c3;"></div>
<div class="b" style="left:781px;top:381px;width:1px;height:34px;background:#c3c3c3;"></div>
<div class="b" style="left:856px;top:381px;width:1px;height:34px;background:#c3c3c3;"></div>
<div class="b" style="left:931px;top:381px;width:1px;height:34px;background:#c3c3c3;"></div>
<div class="b" style="left:1011px;top:381px;width:1px;height:34px;background:#c3c3c3;"></div>
<div class="b" style="left:1086px;top:381px;width:1px;height:34px;background:#c3c3c3;"></div>
<div class="b" style="left:1161px;top:381px;width:1px;height:34px;background:#c3c3c3;"></div>
<div class="b" style="left:1236px;top:381px;width:1px;height:34px;background:#c3c3c3;"></div>
<div class="b" style="left:1311px;top:381px;width:1px;height:34px;background:#c3c3c3;"></div>
<div class="b" style="left:1371px;top:381px;width:1px;height:34px;background:#c3c3c3;"></div>
<div class="b" style="left:1431px;top:381px;width:1px;height:34px;background:#c3c3c3;"></div>
<div class="b" style="left:1491px;top:381px;width:1px;height:34px;background:#c3c3c3;"></div>
<div class="b" style="left:1551px;top:381px;width:1px;height:34px;background:#c3c3c3;"></div>
<div class="b" style="left:1611px;top:381px;width:1px;height:34px;background:#c3c3c3;"></div>
<div class="b" style="left:1721px;top:381px;width:1px;height:34px;background:#c3c3c3;"></div>
<div class="t" style="left:-261.9px;width:300px;text-align:right;top:384px;font-size:11px;line-height:13px;color:#0000ff;letter-spacing:0.1px;">11</div>
<div class="t " style="left:42px;top:384px;font-size:11px;line-height:13px;color:#0000ff;font-weight:700;-webkit-text-stroke:0.25px;">Прайс</div>
<div class="t " style="left:173px;top:384px;font-size:11px;line-height:13px;color:#0000ff;letter-spacing:0.04px;">ИП 114-5-А3, извещатель тепловой</div>
<div class="t " style="left:173px;top:397px;font-size:11px;line-height:13px;color:#0000ff;letter-spacing:-0.164px;">пожарный максимальный</div>
<div class="t" style="left:198.5px;width:400px;text-align:center;top:384px;font-size:11px;line-height:13px;color:#0000ff;">шт.</div>
<div class="t" style="left:255.1px;width:300px;text-align:right;top:384px;font-size:11px;line-height:13px;color:#0000ff;letter-spacing:0.1px;">8</div>
<div class="t" style="left:330.1px;width:300px;text-align:right;top:384px;font-size:11px;line-height:13px;color:#0000ff;letter-spacing:0.1px;">50,00</div>
<div class="t" style="left:710.1px;width:300px;text-align:right;top:384px;font-size:11px;line-height:13px;color:#0000ff;letter-spacing:0.1px;">400</div>
<div class="t" style="left:1070px;width:300px;text-align:right;top:384px;font-size:11px;line-height:13px;color:#0000ff;">0</div>
<div class="t" style="left:1130px;width:300px;text-align:right;top:384px;font-size:11px;line-height:13px;color:#0000ff;">0</div>
<div class="t" style="left:1190px;width:300px;text-align:right;top:384px;font-size:11px;line-height:13px;color:#0000ff;">0</div>
<div class="t" style="left:1250px;width:300px;text-align:right;top:384px;font-size:11px;line-height:13px;color:#0000ff;">0</div>
<svg class="b" style="left:14px;top:401px" width="9" height="9" viewBox="0 0 9 9"><defs><linearGradient id="pbx" x1="0" y1="0" x2="0" y2="1"><stop offset="0" stop-color="#ffffff"/><stop offset="1" stop-color="#dedede"/></linearGradient></defs><rect x="0.5" y="0.5" width="8" height="8" rx="1" fill="url(#pbx)" stroke="#8a8a8a"/><path d="M2 4.5 H7" stroke="#2c3e8c" stroke-width="1"/><path d="M4.5 2 V7" stroke="#2c3e8c" stroke-width="1"/></svg>
<div class="b" style="left:0px;top:415px;width:1722px;height:34px;background:#fff;"></div>
<div class="b" style="left:0px;top:448px;width:1722px;height:1px;background:#c3c3c3;"></div>
<div class="b" style="left:39px;top:415px;width:1px;height:34px;background:#c3c3c3;"></div>
<div class="b" style="left:171px;top:415px;width:1px;height:34px;background:#c3c3c3;"></div>
<div class="b" style="left:361px;top:415px;width:1px;height:34px;background:#c3c3c3;"></div>
<div class="b" style="left:436px;top:415px;width:1px;height:34px;background:#c3c3c3;"></div>
<div class="b" style="left:556px;top:415px;width:1px;height:34px;background:#c3c3c3;"></div>
<div class="b" style="left:631px;top:415px;width:1px;height:34px;background:#c3c3c3;"></div>
<div class="b" style="left:706px;top:415px;width:1px;height:34px;background:#c3c3c3;"></div>
<div class="b" style="left:781px;top:415px;width:1px;height:34px;background:#c3c3c3;"></div>
<div class="b" style="left:856px;top:415px;width:1px;height:34px;background:#c3c3c3;"></div>
<div class="b" style="left:931px;top:415px;width:1px;height:34px;background:#c3c3c3;"></div>
<div class="b" style="left:1011px;top:415px;width:1px;height:34px;background:#c3c3c3;"></div>
<div class="b" style="left:1086px;top:415px;width:1px;height:34px;background:#c3c3c3;"></div>
<div class="b" style="left:1161px;top:415px;width:1px;height:34px;background:#c3c3c3;"></div>
<div class="b" style="left:1236px;top:415px;width:1px;height:34px;background:#c3c3c3;"></div>
<div class="b" style="left:1311px;top:415px;width:1px;height:34px;background:#c3c3c3;"></div>
<div class="b" style="left:1371px;top:415px;width:1px;height:34px;background:#c3c3c3;"></div>
<div class="b" style="left:1431px;top:415px;width:1px;height:34px;background:#c3c3c3;"></div>
<div class="b" style="left:1491px;top:415px;width:1px;height:34px;background:#c3c3c3;"></div>
<div class="b" style="left:1551px;top:415px;width:1px;height:34px;background:#c3c3c3;"></div>
<div class="b" style="left:1611px;top:415px;width:1px;height:34px;background:#c3c3c3;"></div>
<div class="b" style="left:1721px;top:415px;width:1px;height:34px;background:#c3c3c3;"></div>
<div class="t" style="left:-261.9px;width:300px;text-align:right;top:418px;font-size:11px;line-height:13px;color:#0000ff;letter-spacing:0.1px;">12</div>
<div class="t " style="left:42px;top:418px;font-size:11px;line-height:13px;color:#0000ff;font-weight:700;-webkit-text-stroke:0.25px;">Прайс</div>
<div class="t " style="left:173px;top:418px;font-size:11px;line-height:13px;color:#0000ff;letter-spacing:-0.09px;">ИПР-3СУМ, извещатель пожарный</div>
<div class="t " style="left:173px;top:431px;font-size:11px;line-height:13px;color:#0000ff;letter-spacing:0.084px;">ручной</div>
<div class="t" style="left:198.5px;width:400px;text-align:center;top:418px;font-size:11px;line-height:13px;color:#0000ff;">шт.</div>
<div class="t" style="left:255.1px;width:300px;text-align:right;top:418px;font-size:11px;line-height:13px;color:#0000ff;letter-spacing:0.1px;">1</div>
<div class="t" style="left:330.1px;width:300px;text-align:right;top:418px;font-size:11px;line-height:13px;color:#0000ff;letter-spacing:0.1px;">330,00</div>
<div class="t" style="left:710.1px;width:300px;text-align:right;top:418px;font-size:11px;line-height:13px;color:#0000ff;letter-spacing:0.1px;">330</div>
<div class="t" style="left:1070px;width:300px;text-align:right;top:418px;font-size:11px;line-height:13px;color:#0000ff;">0</div>
<div class="t" style="left:1130px;width:300px;text-align:right;top:418px;font-size:11px;line-height:13px;color:#0000ff;">0</div>
<div class="t" style="left:1190px;width:300px;text-align:right;top:418px;font-size:11px;line-height:13px;color:#0000ff;">0</div>
<div class="t" style="left:1250px;width:300px;text-align:right;top:418px;font-size:11px;line-height:13px;color:#0000ff;">0</div>
<svg class="b" style="left:14px;top:435px" width="9" height="9" viewBox="0 0 9 9"><defs><linearGradient id="pbx" x1="0" y1="0" x2="0" y2="1"><stop offset="0" stop-color="#ffffff"/><stop offset="1" stop-color="#dedede"/></linearGradient></defs><rect x="0.5" y="0.5" width="8" height="8" rx="1" fill="url(#pbx)" stroke="#8a8a8a"/><path d="M2 4.5 H7" stroke="#2c3e8c" stroke-width="1"/><path d="M4.5 2 V7" stroke="#2c3e8c" stroke-width="1"/></svg>
<div class="b" style="left:0px;top:449px;width:1722px;height:34px;background:#fff;"></div>
<div class="b" style="left:0px;top:482px;width:1722px;height:1px;background:#c3c3c3;"></div>
<div class="b" style="left:39px;top:449px;width:1px;height:34px;background:#c3c3c3;"></div>
<div class="b" style="left:171px;top:449px;width:1px;height:34px;background:#c3c3c3;"></div>
<div class="b" style="left:361px;top:449px;width:1px;height:34px;background:#c3c3c3;"></div>
<div class="b" style="left:436px;top:449px;width:1px;height:34px;background:#c3c3c3;"></div>
<div class="b" style="left:556px;top:449px;width:1px;height:34px;background:#c3c3c3;"></div>
<div class="b" style="left:631px;top:449px;width:1px;height:34px;background:#c3c3c3;"></div>
<div class="b" style="left:706px;top:449px;width:1px;height:34px;background:#c3c3c3;"></div>
<div class="b" style="left:781px;top:449px;width:1px;height:34px;background:#c3c3c3;"></div>
<div class="b" style="left:856px;top:449px;width:1px;height:34px;background:#c3c3c3;"></div>
<div class="b" style="left:931px;top:449px;width:1px;height:34px;background:#c3c3c3;"></div>
<div class="b" style="left:1011px;top:449px;width:1px;height:34px;background:#c3c3c3;"></div>
<div class="b" style="left:1086px;top:449px;width:1px;height:34px;background:#c3c3c3;"></div>
<div class="b" style="left:1161px;top:449px;width:1px;height:34px;background:#c3c3c3;"></div>
<div class="b" style="left:1236px;top:449px;width:1px;height:34px;background:#c3c3c3;"></div>
<div class="b" style="left:1311px;top:449px;width:1px;height:34px;background:#c3c3c3;"></div>
<div class="b" style="left:1371px;top:449px;width:1px;height:34px;background:#c3c3c3;"></div>
<div class="b" style="left:1431px;top:449px;width:1px;height:34px;background:#c3c3c3;"></div>
<div class="b" style="left:1491px;top:449px;width:1px;height:34px;background:#c3c3c3;"></div>
<div class="b" style="left:1551px;top:449px;width:1px;height:34px;background:#c3c3c3;"></div>
<div class="b" style="left:1611px;top:449px;width:1px;height:34px;background:#c3c3c3;"></div>
<div class="b" style="left:1721px;top:449px;width:1px;height:34px;background:#c3c3c3;"></div>
<div class="t" style="left:-261.9px;width:300px;text-align:right;top:452px;font-size:11px;line-height:13px;color:#0000ff;letter-spacing:0.1px;">13</div>
<div class="t " style="left:42px;top:452px;font-size:11px;line-height:13px;color:#0000ff;font-weight:700;-webkit-text-stroke:0.25px;">Прайс</div>
<div class="t " style="left:173px;top:452px;font-size:11px;line-height:13px;color:#0000ff;letter-spacing:-0.022px;">Гром-12М, оповещатель</div>
<div class="t " style="left:173px;top:465px;font-size:11px;line-height:13px;color:#0000ff;letter-spacing:0.111px;">охранно-пожарный звуковой</div>
<div class="t" style="left:198.5px;width:400px;text-align:center;top:452px;font-size:11px;line-height:13px;color:#0000ff;">шт.</div>
<div class="t" style="left:255.1px;width:300px;text-align:right;top:452px;font-size:11px;line-height:13px;color:#0000ff;letter-spacing:0.1px;">1</div>
<div class="t" style="left:330.1px;width:300px;text-align:right;top:452px;font-size:11px;line-height:13px;color:#0000ff;letter-spacing:0.1px;">450,00</div>
<div class="t" style="left:710.1px;width:300px;text-align:right;top:452px;font-size:11px;line-height:13px;color:#0000ff;letter-spacing:0.1px;">450</div>
<div class="t" style="left:1070px;width:300px;text-align:right;top:452px;font-size:11px;line-height:13px;color:#0000ff;">0</div>
<div class="t" style="left:1130px;width:300px;text-align:right;top:452px;font-size:11px;line-height:13px;color:#0000ff;">0</div>
<div class="t" style="left:1190px;width:300px;text-align:right;top:452px;font-size:11px;line-height:13px;color:#0000ff;">0</div>
<div class="t" style="left:1250px;width:300px;text-align:right;top:452px;font-size:11px;line-height:13px;color:#0000ff;">0</div>
<svg class="b" style="left:14px;top:469px" width="9" height="9" viewBox="0 0 9 9"><defs><linearGradient id="pbx" x1="0" y1="0" x2="0" y2="1"><stop offset="0" stop-color="#ffffff"/><stop offset="1" stop-color="#dedede"/></linearGradient></defs><rect x="0.5" y="0.5" width="8" height="8" rx="1" fill="url(#pbx)" stroke="#8a8a8a"/><path d="M2 4.5 H7" stroke="#2c3e8c" stroke-width="1"/><path d="M4.5 2 V7" stroke="#2c3e8c" stroke-width="1"/></svg>
<div class="b" style="left:0px;top:483px;width:1722px;height:34px;background:#fff;"></div>
<div class="b" style="left:0px;top:516px;width:1722px;height:1px;background:#c3c3c3;"></div>
<div class="b" style="left:39px;top:483px;width:1px;height:34px;background:#c3c3c3;"></div>
<div class="b" style="left:171px;top:483px;width:1px;height:34px;background:#c3c3c3;"></div>
<div class="b" style="left:361px;top:483px;width:1px;height:34px;background:#c3c3c3;"></div>
<div class="b" style="left:436px;top:483px;width:1px;height:34px;background:#c3c3c3;"></div>
<div class="b" style="left:556px;top:483px;width:1px;height:34px;background:#c3c3c3;"></div>
<div class="b" style="left:631px;top:483px;width:1px;height:34px;background:#c3c3c3;"></div>
<div class="b" style="left:706px;top:483px;width:1px;height:34px;background:#c3c3c3;"></div>
<div class="b" style="left:781px;top:483px;width:1px;height:34px;background:#c3c3c3;"></div>
<div class="b" style="left:856px;top:483px;width:1px;height:34px;background:#c3c3c3;"></div>
<div class="b" style="left:931px;top:483px;width:1px;height:34px;background:#c3c3c3;"></div>
<div class="b" style="left:1011px;top:483px;width:1px;height:34px;background:#c3c3c3;"></div>
<div class="b" style="left:1086px;top:483px;width:1px;height:34px;background:#c3c3c3;"></div>
<div class="b" style="left:1161px;top:483px;width:1px;height:34px;background:#c3c3c3;"></div>
<div class="b" style="left:1236px;top:483px;width:1px;height:34px;background:#c3c3c3;"></div>
<div class="b" style="left:1311px;top:483px;width:1px;height:34px;background:#c3c3c3;"></div>
<div class="b" style="left:1371px;top:483px;width:1px;height:34px;background:#c3c3c3;"></div>
<div class="b" style="left:1431px;top:483px;width:1px;height:34px;background:#c3c3c3;"></div>
<div class="b" style="left:1491px;top:483px;width:1px;height:34px;background:#c3c3c3;"></div>
<div class="b" style="left:1551px;top:483px;width:1px;height:34px;background:#c3c3c3;"></div>
<div class="b" style="left:1611px;top:483px;width:1px;height:34px;background:#c3c3c3;"></div>
<div class="b" style="left:1721px;top:483px;width:1px;height:34px;background:#c3c3c3;"></div>
<div class="t" style="left:-261.9px;width:300px;text-align:right;top:486px;font-size:11px;line-height:13px;color:#0000ff;letter-spacing:0.1px;">14</div>
<div class="t " style="left:42px;top:486px;font-size:11px;line-height:13px;color:#0000ff;font-weight:700;-webkit-text-stroke:0.25px;">Прайс</div>
<div class="t " style="left:173px;top:486px;font-size:11px;line-height:13px;color:#0000ff;letter-spacing:-0.05px;">Молния-12В, "Выход" Оповещатель</div>
<div class="t " style="left:173px;top:499px;font-size:11px;line-height:13px;color:#0000ff;letter-spacing:0.072px;">охранно-пожарный (табло)</div>
<div class="t" style="left:198.5px;width:400px;text-align:center;top:486px;font-size:11px;line-height:13px;color:#0000ff;">шт.</div>
<div class="t" style="left:255.1px;width:300px;text-align:right;top:486px;font-size:11px;line-height:13px;color:#0000ff;letter-spacing:0.1px;">2</div>
<div class="t" style="left:330.1px;width:300px;text-align:right;top:486px;font-size:11px;line-height:13px;color:#0000ff;letter-spacing:0.1px;">350,00</div>
<div class="t" style="left:710.1px;width:300px;text-align:right;top:486px;font-size:11px;line-height:13px;color:#0000ff;letter-spacing:0.1px;">700</div>
<div class="t" style="left:1070px;width:300px;text-align:right;top:486px;font-size:11px;line-height:13px;color:#0000ff;">0</div>
<div class="t" style="left:1130px;width:300px;text-align:right;top:486px;font-size:11px;line-height:13px;color:#0000ff;">0</div>
<div class="t" style="left:1190px;width:300px;text-align:right;top:486px;font-size:11px;line-height:13px;color:#0000ff;">0</div>
<div class="t" style="left:1250px;width:300px;text-align:right;top:486px;font-size:11px;line-height:13px;color:#0000ff;">0</div>
<svg class="b" style="left:14px;top:503px" width="9" height="9" viewBox="0 0 9 9"><defs><linearGradient id="pbx" x1="0" y1="0" x2="0" y2="1"><stop offset="0" stop-color="#ffffff"/><stop offset="1" stop-color="#dedede"/></linearGradient></defs><rect x="0.5" y="0.5" width="8" height="8" rx="1" fill="url(#pbx)" stroke="#8a8a8a"/><path d="M2 4.5 H7" stroke="#2c3e8c" stroke-width="1"/><path d="M4.5 2 V7" stroke="#2c3e8c" stroke-width="1"/></svg>
<div class="b" style="left:0px;top:517px;width:1722px;height:34px;background:#fff;"></div>
<div class="b" style="left:0px;top:550px;width:1722px;height:1px;background:#c3c3c3;"></div>
<div class="b" style="left:39px;top:517px;width:1px;height:34px;background:#c3c3c3;"></div>
<div class="b" style="left:171px;top:517px;width:1px;height:34px;background:#c3c3c3;"></div>
<div class="b" style="left:361px;top:517px;width:1px;height:34px;background:#c3c3c3;"></div>
<div class="b" style="left:436px;top:517px;width:1px;height:34px;background:#c3c3c3;"></div>
<div class="b" style="left:556px;top:517px;width:1px;height:34px;background:#c3c3c3;"></div>
<div class="b" style="left:631px;top:517px;width:1px;height:34px;background:#c3c3c3;"></div>
<div class="b" style="left:706px;top:517px;width:1px;height:34px;background:#c3c3c3;"></div>
<div class="b" style="left:781px;top:517px;width:1px;height:34px;background:#c3c3c3;"></div>
<div class="b" style="left:856px;top:517px;width:1px;height:34px;background:#c3c3c3;"></div>
<div class="b" style="left:931px;top:517px;width:1px;height:34px;background:#c3c3c3;"></div>
<div class="b" style="left:1011px;top:517px;width:1px;height:34px;background:#c3c3c3;"></div>
<div class="b" style="left:1086px;top:517px;width:1px;height:34px;background:#c3c3c3;"></div>
<div class="b" style="left:1161px;top:517px;width:1px;height:34px;background:#c3c3c3;"></div>
<div class="b" style="left:1236px;top:517px;width:1px;height:34px;background:#c3c3c3;"></div>
<div class="b" style="left:1311px;top:517px;width:1px;height:34px;background:#c3c3c3;"></div>
<div class="b" style="left:1371px;top:517px;width:1px;height:34px;background:#c3c3c3;"></div>
<div class="b" style="left:1431px;top:517px;width:1px;height:34px;background:#c3c3c3;"></div>
<div class="b" style="left:1491px;top:517px;width:1px;height:34px;background:#c3c3c3;"></div>
<div class="b" style="left:1551px;top:517px;width:1px;height:34px;background:#c3c3c3;"></div>
<div class="b" style="left:1611px;top:517px;width:1px;height:34px;background:#c3c3c3;"></div>
<div class="b" style="left:1721px;top:517px;width:1px;height:34px;background:#c3c3c3;"></div>
<div class="t" style="left:-261.9px;width:300px;text-align:right;top:520px;font-size:11px;line-height:13px;color:#0000ff;letter-spacing:0.1px;">15</div>
<div class="t " style="left:42px;top:520px;font-size:11px;line-height:13px;color:#0000ff;font-weight:700;-webkit-text-stroke:0.25px;">Прайс</div>
<div class="t " style="left:173px;top:520px;font-size:11px;line-height:13px;color:#0000ff;letter-spacing:0.056px;">УК-2П, Коробка распределительная</div>
<div class="t" style="left:198.5px;width:400px;text-align:center;top:520px;font-size:11px;line-height:13px;color:#0000ff;">шт.</div>
<div class="t" style="left:255.1px;width:300px;text-align:right;top:520px;font-size:11px;line-height:13px;color:#0000ff;letter-spacing:0.1px;">2</div>
<div class="t" style="left:330.1px;width:300px;text-align:right;top:520px;font-size:11px;line-height:13px;color:#0000ff;letter-spacing:0.1px;">21,00</div>
<div class="t" style="left:710.1px;width:300px;text-align:right;top:520px;font-size:11px;line-height:13px;color:#0000ff;letter-spacing:0.1px;">42</div>
<div class="t" style="left:1070px;width:300px;text-align:right;top:520px;font-size:11px;line-height:13px;color:#0000ff;">0</div>
<div class="t" style="left:1130px;width:300px;text-align:right;top:520px;font-size:11px;line-height:13px;color:#0000ff;">0</div>
<div class="t" style="left:1190px;width:300px;text-align:right;top:520px;font-size:11px;line-height:13px;color:#0000ff;">0</div>
<div class="t" style="left:1250px;width:300px;text-align:right;top:520px;font-size:11px;line-height:13px;color:#0000ff;">0</div>
<svg class="b" style="left:14px;top:537px" width="9" height="9" viewBox="0 0 9 9"><defs><linearGradient id="pbx" x1="0" y1="0" x2="0" y2="1"><stop offset="0" stop-color="#ffffff"/><stop offset="1" stop-color="#dedede"/></linearGradient></defs><rect x="0.5" y="0.5" width="8" height="8" rx="1" fill="url(#pbx)" stroke="#8a8a8a"/><path d="M2 4.5 H7" stroke="#2c3e8c" stroke-width="1"/><path d="M4.5 2 V7" stroke="#2c3e8c" stroke-width="1"/></svg>
<div class="b" style="left:0px;top:551px;width:1722px;height:34px;background:#fff;"></div>
<div class="b" style="left:0px;top:584px;width:1722px;height:1px;background:#c3c3c3;"></div>
<div class="b" style="left:39px;top:551px;width:1px;height:34px;background:#c3c3c3;"></div>
<div class="b" style="left:171px;top:551px;width:1px;height:34px;background:#c3c3c3;"></div>
<div class="b" style="left:361px;top:551px;width:1px;height:34px;background:#c3c3c3;"></div>
<div class="b" style="left:436px;top:551px;width:1px;height:34px;background:#c3c3c3;"></div>
<div class="b" style="left:556px;top:551px;width:1px;height:34px;background:#c3c3c3;"></div>
<div class="b" style="left:631px;top:551px;width:1px;height:34px;background:#c3c3c3;"></div>
<div class="b" style="left:706px;top:551px;width:1px;height:34px;background:#c3c3c3;"></div>
<div class="b" style="left:781px;top:551px;width:1px;height:34px;background:#c3c3c3;"></div>
<div class="b" style="left:856px;top:551px;width:1px;height:34px;background:#c3c3c3;"></div>
<div class="b" style="left:931px;top:551px;width:1px;height:34px;background:#c3c3c3;"></div>
<div class="b" style="left:1011px;top:551px;width:1px;height:34px;background:#c3c3c3;"></div>
<div class="b" style="left:1086px;top:551px;width:1px;height:34px;background:#c3c3c3;"></div>
<div class="b" style="left:1161px;top:551px;width:1px;height:34px;background:#c3c3c3;"></div>
<div class="b" style="left:1236px;top:551px;width:1px;height:34px;background:#c3c3c3;"></div>
<div class="b" style="left:1311px;top:551px;width:1px;height:34px;background:#c3c3c3;"></div>
<div class="b" style="left:1371px;top:551px;width:1px;height:34px;background:#c3c3c3;"></div>
<div class="b" style="left:1431px;top:551px;width:1px;height:34px;background:#c3c3c3;"></div>
<div class="b" style="left:1491px;top:551px;width:1px;height:34px;background:#c3c3c3;"></div>
<div class="b" style="left:1551px;top:551px;width:1px;height:34px;background:#c3c3c3;"></div>
<div class="b" style="left:1611px;top:551px;width:1px;height:34px;background:#c3c3c3;"></div>
<div class="b" style="left:1721px;top:551px;width:1px;height:34px;background:#c3c3c3;"></div>
<div class="t" style="left:-261.9px;width:300px;text-align:right;top:554px;font-size:11px;line-height:13px;color:#0000ff;letter-spacing:0.1px;">16</div>
<div class="t " style="left:42px;top:554px;font-size:11px;line-height:13px;color:#0000ff;font-weight:700;-webkit-text-stroke:0.25px;">Прайс</div>
<div class="t " style="left:173px;top:554px;font-size:11px;line-height:13px;color:#0000ff;letter-spacing:-0.152px;">Труба  ПНД гибкая  20мм</div>
<div class="t" style="left:198.5px;width:400px;text-align:center;top:554px;font-size:11px;line-height:13px;color:#0000ff;">м.</div>
<div class="t" style="left:255.1px;width:300px;text-align:right;top:554px;font-size:11px;line-height:13px;color:#0000ff;letter-spacing:0.1px;">100</div>
<div class="t" style="left:330.1px;width:300px;text-align:right;top:554px;font-size:11px;line-height:13px;color:#0000ff;letter-spacing:0.1px;">12,00</div>
<div class="t" style="left:710.1px;width:300px;text-align:right;top:554px;font-size:11px;line-height:13px;color:#0000ff;letter-spacing:0.1px;">1 200</div>
<div class="t" style="left:1070px;width:300px;text-align:right;top:554px;font-size:11px;line-height:13px;color:#0000ff;">0</div>
<div class="t" style="left:1130px;width:300px;text-align:right;top:554px;font-size:11px;line-height:13px;color:#0000ff;">0</div>
<div class="t" style="left:1190px;width:300px;text-align:right;top:554px;font-size:11px;line-height:13px;color:#0000ff;">0</div>
<div class="t" style="left:1250px;width:300px;text-align:right;top:554px;font-size:11px;line-height:13px;color:#0000ff;">0</div>
<svg class="b" style="left:14px;top:571px" width="9" height="9" viewBox="0 0 9 9"><defs><linearGradient id="pbx" x1="0" y1="0" x2="0" y2="1"><stop offset="0" stop-color="#ffffff"/><stop offset="1" stop-color="#dedede"/></linearGradient></defs><rect x="0.5" y="0.5" width="8" height="8" rx="1" fill="url(#pbx)" stroke="#8a8a8a"/><path d="M2 4.5 H7" stroke="#2c3e8c" stroke-width="1"/><path d="M4.5 2 V7" stroke="#2c3e8c" stroke-width="1"/></svg>
<div class="b" style="left:0px;top:585px;width:1722px;height:34px;background:#fff;"></div>
<div class="b" style="left:0px;top:618px;width:1722px;height:1px;background:#c3c3c3;"></div>
<div class="b" style="left:39px;top:585px;width:1px;height:34px;background:#c3c3c3;"></div>
<div class="b" style="left:171px;top:585px;width:1px;height:34px;background:#c3c3c3;"></div>
<div class="b" style="left:361px;top:585px;width:1px;height:34px;background:#c3c3c3;"></div>
<div class="b" style="left:436px;top:585px;width:1px;height:34px;background:#c3c3c3;"></div>
<div class="b" style="left:556px;top:585px;width:1px;height:34px;background:#c3c3c3;"></div>
<div class="b" style="left:631px;top:585px;width:1px;height:34px;background:#c3c3c3;"></div>
<div class="b" style="left:706px;top:585px;width:1px;height:34px;background:#c3c3c3;"></div>
<div class="b" style="left:781px;top:585px;width:1px;height:34px;background:#c3c3c3;"></div>
<div class="b" style="left:856px;top:585px;width:1px;height:34px;background:#c3c3c3;"></div>
<div class="b" style="left:931px;top:585px;width:1px;height:34px;background:#c3c3c3;"></div>
<div class="b" style="left:1011px;top:585px;width:1px;height:34px;background:#c3c3c3;"></div>
<div class="b" style="left:1086px;top:585px;width:1px;height:34px;background:#c3c3c3;"></div>
<div class="b" style="left:1161px;top:585px;width:1px;height:34px;background:#c3c3c3;"></div>
<div class="b" style="left:1236px;top:585px;width:1px;height:34px;background:#c3c3c3;"></div>
<div class="b" style="left:1311px;top:585px;width:1px;height:34px;background:#c3c3c3;"></div>
<div class="b" style="left:1371px;top:585px;width:1px;height:34px;background:#c3c3c3;"></div>
<div class="b" style="left:1431px;top:585px;width:1px;height:34px;background:#c3c3c3;"></div>
<div class="b" style="left:1491px;top:585px;width:1px;height:34px;background:#c3c3c3;"></div>
<div class="b" style="left:1551px;top:585px;width:1px;height:34px;background:#c3c3c3;"></div>
<div class="b" style="left:1611px;top:585px;width:1px;height:34px;background:#c3c3c3;"></div>
<div class="b" style="left:1721px;top:585px;width:1px;height:34px;background:#c3c3c3;"></div>
<div class="t" style="left:-261.9px;width:300px;text-align:right;top:588px;font-size:11px;line-height:13px;color:#0000ff;letter-spacing:0.1px;">17</div>
<div class="t " style="left:42px;top:588px;font-size:11px;line-height:13px;color:#0000ff;font-weight:700;-webkit-text-stroke:0.25px;">Прайс</div>
<div class="t " style="left:173px;top:588px;font-size:11px;line-height:13px;color:#0000ff;letter-spacing:-0.063px;">Кабель КПСнг(А)-FRLS 1x2x0,5</div>
<div class="t" style="left:198.5px;width:400px;text-align:center;top:588px;font-size:11px;line-height:13px;color:#0000ff;">м.</div>
<div class="t" style="left:255.1px;width:300px;text-align:right;top:588px;font-size:11px;line-height:13px;color:#0000ff;letter-spacing:0.1px;">120</div>
<div class="t" style="left:330.1px;width:300px;text-align:right;top:588px;font-size:11px;line-height:13px;color:#0000ff;letter-spacing:0.1px;">21,00</div>
<div class="t" style="left:710.1px;width:300px;text-align:right;top:588px;font-size:11px;line-height:13px;color:#0000ff;letter-spacing:0.1px;">2 520</div>
<div class="t" style="left:1070px;width:300px;text-align:right;top:588px;font-size:11px;line-height:13px;color:#0000ff;">0</div>
<div class="t" style="left:1130px;width:300px;text-align:right;top:588px;font-size:11px;line-height:13px;color:#0000ff;">0</div>
<div class="t" style="left:1190px;width:300px;text-align:right;top:588px;font-size:11px;line-height:13px;color:#0000ff;">0</div>
<div class="t" style="left:1250px;width:300px;text-align:right;top:588px;font-size:11px;line-height:13px;color:#0000ff;">0</div>
<svg class="b" style="left:14px;top:605px" width="9" height="9" viewBox="0 0 9 9"><defs><linearGradient id="pbx" x1="0" y1="0" x2="0" y2="1"><stop offset="0" stop-color="#ffffff"/><stop offset="1" stop-color="#dedede"/></linearGradient></defs><rect x="0.5" y="0.5" width="8" height="8" rx="1" fill="url(#pbx)" stroke="#8a8a8a"/><path d="M2 4.5 H7" stroke="#2c3e8c" stroke-width="1"/><path d="M4.5 2 V7" stroke="#2c3e8c" stroke-width="1"/></svg>
<div class="b" style="left:0px;top:619px;width:1722px;height:34px;background:#fff;"></div>
<div class="b" style="left:0px;top:652px;width:1722px;height:1px;background:#c3c3c3;"></div>
<div class="b" style="left:39px;top:619px;width:1px;height:34px;background:#c3c3c3;"></div>
<div class="b" style="left:171px;top:619px;width:1px;height:34px;background:#c3c3c3;"></div>
<div class="b" style="left:361px;top:619px;width:1px;height:34px;background:#c3c3c3;"></div>
<div class="b" style="left:436px;top:619px;width:1px;height:34px;background:#c3c3c3;"></div>
<div class="b" style="left:556px;top:619px;width:1px;height:34px;background:#c3c3c3;"></div>
<div class="b" style="left:631px;top:619px;width:1px;height:34px;background:#c3c3c3;"></div>
<div class="b" style="left:706px;top:619px;width:1px;height:34px;background:#c3c3c3;"></div>
<div class="b" style="left:781px;top:619px;width:1px;height:34px;background:#c3c3c3;"></div>
<div class="b" style="left:856px;top:619px;width:1px;height:34px;background:#c3c3c3;"></div>
<div class="b" style="left:931px;top:619px;width:1px;height:34px;background:#c3c3c3;"></div>
<div class="b" style="left:1011px;top:619px;width:1px;height:34px;background:#c3c3c3;"></div>
<div class="b" style="left:1086px;top:619px;width:1px;height:34px;background:#c3c3c3;"></div>
<div class="b" style="left:1161px;top:619px;width:1px;height:34px;background:#c3c3c3;"></div>
<div class="b" style="left:1236px;top:619px;width:1px;height:34px;background:#c3c3c3;"></div>
<div class="b" style="left:1311px;top:619px;width:1px;height:34px;background:#c3c3c3;"></div>
<div class="b" style="left:1371px;top:619px;width:1px;height:34px;background:#c3c3c3;"></div>
<div class="b" style="left:1431px;top:619px;width:1px;height:34px;background:#c3c3c3;"></div>
<div class="b" style="left:1491px;top:619px;width:1px;height:34px;background:#c3c3c3;"></div>
<div class="b" style="left:1551px;top:619px;width:1px;height:34px;background:#c3c3c3;"></div>
<div class="b" style="left:1611px;top:619px;width:1px;height:34px;background:#c3c3c3;"></div>
<div class="b" style="left:1721px;top:619px;width:1px;height:34px;background:#c3c3c3;"></div>
<div class="t" style="left:-261.9px;width:300px;text-align:right;top:622px;font-size:11px;line-height:13px;color:#0000ff;letter-spacing:0.1px;">18</div>
<div class="t " style="left:42px;top:622px;font-size:11px;line-height:13px;color:#0000ff;font-weight:700;-webkit-text-stroke:0.25px;">Прайс</div>
<div class="t " style="left:173px;top:622px;font-size:11px;line-height:13px;color:#0000ff;letter-spacing:-0.004px;">Короб 25x16</div>
<div class="t" style="left:198.5px;width:400px;text-align:center;top:622px;font-size:11px;line-height:13px;color:#0000ff;">м.</div>
<div class="t" style="left:255.1px;width:300px;text-align:right;top:622px;font-size:11px;line-height:13px;color:#0000ff;letter-spacing:0.1px;">20</div>
<div class="t" style="left:330.1px;width:300px;text-align:right;top:622px;font-size:11px;line-height:13px;color:#0000ff;letter-spacing:0.1px;">65,00</div>
<div class="t" style="left:710.1px;width:300px;text-align:right;top:622px;font-size:11px;line-height:13px;color:#0000ff;letter-spacing:0.1px;">1 300</div>
<div class="t" style="left:1070px;width:300px;text-align:right;top:622px;font-size:11px;line-height:13px;color:#0000ff;">0</div>
<div class="t" style="left:1130px;width:300px;text-align:right;top:622px;font-size:11px;line-height:13px;color:#0000ff;">0</div>
<div class="t" style="left:1190px;width:300px;text-align:right;top:622px;font-size:11px;line-height:13px;color:#0000ff;">0</div>
<div class="t" style="left:1250px;width:300px;text-align:right;top:622px;font-size:11px;line-height:13px;color:#0000ff;">0</div>
<svg class="b" style="left:14px;top:639px" width="9" height="9" viewBox="0 0 9 9"><defs><linearGradient id="pbx" x1="0" y1="0" x2="0" y2="1"><stop offset="0" stop-color="#ffffff"/><stop offset="1" stop-color="#dedede"/></linearGradient></defs><rect x="0.5" y="0.5" width="8" height="8" rx="1" fill="url(#pbx)" stroke="#8a8a8a"/><path d="M2 4.5 H7" stroke="#2c3e8c" stroke-width="1"/><path d="M4.5 2 V7" stroke="#2c3e8c" stroke-width="1"/></svg>
<div class="b" style="left:0px;top:653px;width:1722px;height:17px;background:#d9d9d9;"></div>
<div class="b" style="left:0px;top:669px;width:1722px;height:1px;background:#c3c3c3;"></div>
<div class="b" style="left:1721px;top:653px;width:1px;height:17px;background:#c3c3c3;"></div>
<svg class="b" style="left:2px;top:657px" width="9" height="9" viewBox="0 0 9 9"><defs><linearGradient id="pbx" x1="0" y1="0" x2="0" y2="1"><stop offset="0" stop-color="#ffffff"/><stop offset="1" stop-color="#dedede"/></linearGradient></defs><rect x="0.5" y="0.5" width="8" height="8" rx="1" fill="url(#pbx)" stroke="#8a8a8a"/><path d="M2 4.5 H7" stroke="#2c3e8c" stroke-width="1"/><path d="M4.5 2 V7" stroke="#2c3e8c" stroke-width="1"/></svg>
<div class="t " style="left:14px;top:656px;font-size:11px;line-height:13px;color:#000;font-weight:700;-webkit-text-stroke:0.25px;letter-spacing:0.258px;">Ведомость ресурсов по разделу 3 "ОБОРУДОВАНИЕ И МАТЕРИАЛЫ"</div>
<div class="b" style="left:0px;top:670px;width:1722px;height:18px;background:#fffff0;"></div>
<div class="b" style="left:0px;top:687px;width:1722px;height:1px;background:#c3c3c3;"></div>
<div class="b" style="left:171px;top:670px;width:1px;height:18px;background:#c3c3c3;"></div>
<div class="b" style="left:931px;top:670px;width:1px;height:18px;background:#c3c3c3;"></div>
<div class="b" style="left:1011px;top:670px;width:1px;height:18px;background:#c3c3c3;"></div>
<div class="b" style="left:1086px;top:670px;width:1px;height:18px;background:#c3c3c3;"></div>
<div class="b" style="left:1161px;top:670px;width:1px;height:18px;background:#c3c3c3;"></div>
<div class="b" style="left:1236px;top:670px;width:1px;height:18px;background:#c3c3c3;"></div>
<div class="b" style="left:1311px;top:670px;width:1px;height:18px;background:#c3c3c3;"></div>
<div class="b" style="left:1371px;top:670px;width:1px;height:18px;background:#c3c3c3;"></div>
<div class="b" style="left:1431px;top:670px;width:1px;height:18px;background:#c3c3c3;"></div>
<div class="b" style="left:1491px;top:670px;width:1px;height:18px;background:#c3c3c3;"></div>
<div class="b" style="left:1551px;top:670px;width:1px;height:18px;background:#c3c3c3;"></div>
<div class="b" style="left:1611px;top:670px;width:1px;height:18px;background:#c3c3c3;"></div>
<div class="b" style="left:1721px;top:670px;width:1px;height:18px;background:#c3c3c3;"></div>
<div class="t " style="left:173px;top:673px;font-size:11px;line-height:13px;color:#0000ff;letter-spacing:0.118px;">Итого прямые затраты по разделу в текущих ценах</div>
<div class="t" style="left:710.1px;width:300px;text-align:right;top:673px;font-size:11px;line-height:13px;color:#0000ff;letter-spacing:0.1px;">6 942</div>
<div class="b" style="left:0px;top:688px;width:1722px;height:18px;background:#fffff0;"></div>
<div class="b" style="left:0px;top:705px;width:1722px;height:1px;background:#c3c3c3;"></div>
<div class="b" style="left:171px;top:688px;width:1px;height:18px;background:#c3c3c3;"></div>
<div class="b" style="left:931px;top:688px;width:1px;height:18px;background:#c3c3c3;"></div>
<div class="b" style="left:1011px;top:688px;width:1px;height:18px;background:#c3c3c3;"></div>
<div class="b" style="left:1086px;top:688px;width:1px;height:18px;background:#c3c3c3;"></div>
<div class="b" style="left:1161px;top:688px;width:1px;height:18px;background:#c3c3c3;"></div>
<div class="b" style="left:1236px;top:688px;width:1px;height:18px;background:#c3c3c3;"></div>
<div class="b" style="left:1311px;top:688px;width:1px;height:18px;background:#c3c3c3;"></div>
<div class="b" style="left:1371px;top:688px;width:1px;height:18px;background:#c3c3c3;"></div>
<div class="b" style="left:1431px;top:688px;width:1px;height:18px;background:#c3c3c3;"></div>
<div class="b" style="left:1491px;top:688px;width:1px;height:18px;background:#c3c3c3;"></div>
<div class="b" style="left:1551px;top:688px;width:1px;height:18px;background:#c3c3c3;"></div>
<div class="b" style="left:1611px;top:688px;width:1px;height:18px;background:#c3c3c3;"></div>
<div class="b" style="left:1721px;top:688px;width:1px;height:18px;background:#c3c3c3;"></div>
<svg class="b" style="left:2px;top:692px" width="9" height="9" viewBox="0 0 9 9"><defs><linearGradient id="pbx" x1="0" y1="0" x2="0" y2="1"><stop offset="0" stop-color="#ffffff"/><stop offset="1" stop-color="#dedede"/></linearGradient></defs><rect x="0.5" y="0.5" width="8" height="8" rx="1" fill="url(#pbx)" stroke="#8a8a8a"/><path d="M2 4.5 H7" stroke="#2c3e8c" stroke-width="1"/><path d="M4.5 2 V7" stroke="#2c3e8c" stroke-width="1"/></svg>
<div class="t " style="left:174px;top:691px;font-size:11px;line-height:13px;color:#000;font-weight:700;-webkit-text-stroke:0.25px;letter-spacing:0.246px;">Итого по разделу 3 ОБОРУДОВАНИЕ И МАТЕРИАЛЫ</div>
<div class="t" style="left:710.65px;width:300px;text-align:right;top:691px;font-size:11px;line-height:13px;color:#000;font-weight:700;-webkit-text-stroke:0.25px;letter-spacing:0.65px;">6 942,00</div>
<div class="b" style="left:0px;top:706px;width:1722px;height:17px;background:#d9d9d9;"></div>
<div class="b" style="left:0px;top:722px;width:1722px;height:1px;background:#c3c3c3;"></div>
<div class="b" style="left:1721px;top:706px;width:1px;height:17px;background:#c3c3c3;"></div>
<svg class="b" style="left:2px;top:710px" width="9" height="9" viewBox="0 0 9 9"><defs><linearGradient id="pbx" x1="0" y1="0" x2="0" y2="1"><stop offset="0" stop-color="#ffffff"/><stop offset="1" stop-color="#dedede"/></linearGradient></defs><rect x="0.5" y="0.5" width="8" height="8" rx="1" fill="url(#pbx)" stroke="#8a8a8a"/><path d="M2 4.5 H7" stroke="#2c3e8c" stroke-width="1"/><path d="M4.5 2 V7" stroke="#2c3e8c" stroke-width="1"/></svg>
<div class="t " style="left:14px;top:709px;font-size:11px;line-height:13px;color:#000;font-weight:700;-webkit-text-stroke:0.25px;letter-spacing:0.445px;">Ведомость ресурсов по смете</div>
<div class="b" style="left:0px;top:705px;width:1722px;height:1px;background:#c8c8c8;"></div>
<div class="b" style="left:0px;top:723px;width:1722px;height:18px;background:#fffff0;"></div>
<div class="b" style="left:0px;top:740px;width:1722px;height:1px;background:#c3c3c3;"></div>
<div class="b" style="left:171px;top:723px;width:1px;height:18px;background:#c3c3c3;"></div>
<div class="b" style="left:931px;top:723px;width:1px;height:18px;background:#c3c3c3;"></div>
<div class="b" style="left:1011px;top:723px;width:1px;height:18px;background:#c3c3c3;"></div>
<div class="b" style="left:1086px;top:723px;width:1px;height:18px;background:#c3c3c3;"></div>
<div class="b" style="left:1161px;top:723px;width:1px;height:18px;background:#c3c3c3;"></div>
<div class="b" style="left:1236px;top:723px;width:1px;height:18px;background:#c3c3c3;"></div>
<div class="b" style="left:1311px;top:723px;width:1px;height:18px;background:#c3c3c3;"></div>
<div class="b" style="left:1371px;top:723px;width:1px;height:18px;background:#c3c3c3;"></div>
<div class="b" style="left:1431px;top:723px;width:1px;height:18px;background:#c3c3c3;"></div>
<div class="b" style="left:1491px;top:723px;width:1px;height:18px;background:#c3c3c3;"></div>
<div class="b" style="left:1551px;top:723px;width:1px;height:18px;background:#c3c3c3;"></div>
<div class="b" style="left:1611px;top:723px;width:1px;height:18px;background:#c3c3c3;"></div>
<div class="b" style="left:1721px;top:723px;width:1px;height:18px;background:#c3c3c3;"></div>
<div class="t " style="left:173px;top:726px;font-size:11px;line-height:13px;color:#0000ff;letter-spacing:0.075px;">Итого прямые затраты по смете с учетом индексов, в текущих ценах</div>
<div class="t" style="left:710.1px;width:300px;text-align:right;top:726px;font-size:11px;line-height:13px;color:#0000ff;letter-spacing:0.1px;">38 393</div>
<div class="t" style="left:785.1px;width:300px;text-align:right;top:726px;font-size:11px;line-height:13px;color:#0000ff;letter-spacing:0.1px;">13 832</div>
<div class="t" style="left:860.1px;width:300px;text-align:right;top:726px;font-size:11px;line-height:13px;color:#0000ff;letter-spacing:0.1px;">8 123</div>
<div class="t" style="left:935.1px;width:300px;text-align:right;top:726px;font-size:11px;line-height:13px;color:#0000ff;letter-spacing:0.1px;">3 475</div>
<div class="t" style="left:1010.1px;width:300px;text-align:right;top:726px;font-size:11px;line-height:13px;color:#0000ff;letter-spacing:0.1px;">9 496</div>
<div class="t" style="left:1130.1px;width:300px;text-align:right;top:726px;font-size:11px;line-height:13px;color:#0000ff;letter-spacing:0.1px;">79,99</div>
<div class="t" style="left:1250.1px;width:300px;text-align:right;top:726px;font-size:11px;line-height:13px;color:#0000ff;letter-spacing:0.1px;">18,79</div>
<div class="b" style="left:0px;top:741px;width:1722px;height:18px;background:#fffff0;"></div>
<div class="b" style="left:0px;top:758px;width:1722px;height:1px;background:#c3c3c3;"></div>
<div class="b" style="left:171px;top:741px;width:1px;height:18px;background:#c3c3c3;"></div>
<div class="b" style="left:931px;top:741px;width:1px;height:18px;background:#c3c3c3;"></div>
<div class="b" style="left:1011px;top:741px;width:1px;height:18px;background:#c3c3c3;"></div>
<div class="b" style="left:1086px;top:741px;width:1px;height:18px;background:#c3c3c3;"></div>
<div class="b" style="left:1161px;top:741px;width:1px;height:18px;background:#c3c3c3;"></div>
<div class="b" style="left:1236px;top:741px;width:1px;height:18px;background:#c3c3c3;"></div>
<div class="b" style="left:1311px;top:741px;width:1px;height:18px;background:#c3c3c3;"></div>
<div class="b" style="left:1371px;top:741px;width:1px;height:18px;background:#c3c3c3;"></div>
<div class="b" style="left:1431px;top:741px;width:1px;height:18px;background:#c3c3c3;"></div>
<div class="b" style="left:1491px;top:741px;width:1px;height:18px;background:#c3c3c3;"></div>
<div class="b" style="left:1551px;top:741px;width:1px;height:18px;background:#c3c3c3;"></div>
<div class="b" style="left:1611px;top:741px;width:1px;height:18px;background:#c3c3c3;"></div>
<div class="b" style="left:1721px;top:741px;width:1px;height:18px;background:#c3c3c3;"></div>
<svg class="b" style="left:2px;top:745px" width="9" height="9" viewBox="0 0 9 9"><defs><linearGradient id="pbx" x1="0" y1="0" x2="0" y2="1"><stop offset="0" stop-color="#ffffff"/><stop offset="1" stop-color="#dedede"/></linearGradient></defs><rect x="0.5" y="0.5" width="8" height="8" rx="1" fill="url(#pbx)" stroke="#8a8a8a"/><path d="M2 4.5 H7" stroke="#2c3e8c" stroke-width="1"/><path d="M4.5 2 V7" stroke="#2c3e8c" stroke-width="1"/></svg>
<div class="t " style="left:173px;top:744px;font-size:11px;line-height:13px;color:#0000ff;letter-spacing:0.032px;">Накладные расходы</div>
<div class="t" style="left:710.1px;width:300px;text-align:right;top:744px;font-size:11px;line-height:13px;color:#0000ff;letter-spacing:0.1px;">12 612</div>
<div class="b" style="left:0px;top:759px;width:1722px;height:18px;background:#fffff0;"></div>
<div class="b" style="left:0px;top:776px;width:1722px;height:1px;background:#c3c3c3;"></div>
<div class="b" style="left:171px;top:759px;width:1px;height:18px;background:#c3c3c3;"></div>
<div class="b" style="left:931px;top:759px;width:1px;height:18px;background:#c3c3c3;"></div>
<div class="b" style="left:1011px;top:759px;width:1px;height:18px;background:#c3c3c3;"></div>
<div class="b" style="left:1086px;top:759px;width:1px;height:18px;background:#c3c3c3;"></div>
<div class="b" style="left:1161px;top:759px;width:1px;height:18px;background:#c3c3c3;"></div>
<div class="b" style="left:1236px;top:759px;width:1px;height:18px;background:#c3c3c3;"></div>
<div class="b" style="left:1311px;top:759px;width:1px;height:18px;background:#c3c3c3;"></div>
<div class="b" style="left:1371px;top:759px;width:1px;height:18px;background:#c3c3c3;"></div>
<div class="b" style="left:1431px;top:759px;width:1px;height:18px;background:#c3c3c3;"></div>
<div class="b" style="left:1491px;top:759px;width:1px;height:18px;background:#c3c3c3;"></div>
<div class="b" style="left:1551px;top:759px;width:1px;height:18px;background:#c3c3c3;"></div>
<div class="b" style="left:1611px;top:759px;width:1px;height:18px;background:#c3c3c3;"></div>
<div class="b" style="left:1721px;top:759px;width:1px;height:18px;background:#c3c3c3;"></div>
<svg class="b" style="left:2px;top:763px" width="9" height="9" viewBox="0 0 9 9"><defs><linearGradient id="pbx" x1="0" y1="0" x2="0" y2="1"><stop offset="0" stop-color="#ffffff"/><stop offset="1" stop-color="#dedede"/></linearGradient></defs><rect x="0.5" y="0.5" width="8" height="8" rx="1" fill="url(#pbx)" stroke="#8a8a8a"/><path d="M2 4.5 H7" stroke="#2c3e8c" stroke-width="1"/><path d="M4.5 2 V7" stroke="#2c3e8c" stroke-width="1"/></svg>
<div class="t " style="left:173px;top:762px;font-size:11px;line-height:13px;color:#0000ff;letter-spacing:-0.15px;">Сметная прибыль</div>
<div class="t" style="left:710.1px;width:300px;text-align:right;top:762px;font-size:11px;line-height:13px;color:#0000ff;letter-spacing:0.1px;">8 184</div>
<div class="b" style="left:0px;top:777px;width:1722px;height:18px;background:#fffff0;"></div>
<div class="b" style="left:0px;top:794px;width:1722px;height:1px;background:#c3c3c3;"></div>
<div class="b" style="left:171px;top:777px;width:1px;height:18px;background:#c3c3c3;"></div>
<div class="b" style="left:931px;top:777px;width:1px;height:18px;background:#c3c3c3;"></div>
<div class="b" style="left:1011px;top:777px;width:1px;height:18px;background:#c3c3c3;"></div>
<div class="b" style="left:1086px;top:777px;width:1px;height:18px;background:#c3c3c3;"></div>
<div class="b" style="left:1161px;top:777px;width:1px;height:18px;background:#c3c3c3;"></div>
<div class="b" style="left:1236px;top:777px;width:1px;height:18px;background:#c3c3c3;"></div>
<div class="b" style="left:1311px;top:777px;width:1px;height:18px;background:#c3c3c3;"></div>
<div class="b" style="left:1371px;top:777px;width:1px;height:18px;background:#c3c3c3;"></div>
<div class="b" style="left:1431px;top:777px;width:1px;height:18px;background:#c3c3c3;"></div>
<div class="b" style="left:1491px;top:777px;width:1px;height:18px;background:#c3c3c3;"></div>
<div class="b" style="left:1551px;top:777px;width:1px;height:18px;background:#c3c3c3;"></div>
<div class="b" style="left:1611px;top:777px;width:1px;height:18px;background:#c3c3c3;"></div>
<div class="b" style="left:1721px;top:777px;width:1px;height:18px;background:#c3c3c3;"></div>
<svg class="b" style="left:2px;top:781px" width="9" height="9" viewBox="0 0 9 9"><defs><linearGradient id="pbx" x1="0" y1="0" x2="0" y2="1"><stop offset="0" stop-color="#ffffff"/><stop offset="1" stop-color="#dedede"/></linearGradient></defs><rect x="0.5" y="0.5" width="8" height="8" rx="1" fill="url(#pbx)" stroke="#8a8a8a"/><path d="M2 4.5 H7" stroke="#2c3e8c" stroke-width="1"/></svg>
<div class="t " style="left:174px;top:780px;font-size:11px;line-height:13px;color:#000;font-weight:700;-webkit-text-stroke:0.25px;letter-spacing:0.455px;">Итоги по смете:</div>
<div class="b" style="left:0px;top:795px;width:1722px;height:18px;background:#fffff0;"></div>
<div class="b" style="left:0px;top:812px;width:1722px;height:1px;background:#c3c3c3;"></div>
<div class="b" style="left:171px;top:795px;width:1px;height:18px;background:#c3c3c3;"></div>
<div class="b" style="left:931px;top:795px;width:1px;height:18px;background:#c3c3c3;"></div>
<div class="b" style="left:1011px;top:795px;width:1px;height:18px;background:#c3c3c3;"></div>
<div class="b" style="left:1086px;top:795px;width:1px;height:18px;background:#c3c3c3;"></div>
<div class="b" style="left:1161px;top:795px;width:1px;height:18px;background:#c3c3c3;"></div>
<div class="b" style="left:1236px;top:795px;width:1px;height:18px;background:#c3c3c3;"></div>
<div class="b" style="left:1311px;top:795px;width:1px;height:18px;background:#c3c3c3;"></div>
<div class="b" style="left:1371px;top:795px;width:1px;height:18px;background:#c3c3c3;"></div>
<div class="b" style="left:1431px;top:795px;width:1px;height:18px;background:#c3c3c3;"></div>
<div class="b" style="left:1491px;top:795px;width:1px;height:18px;background:#c3c3c3;"></div>
<div class="b" style="left:1551px;top:795px;width:1px;height:18px;background:#c3c3c3;"></div>
<div class="b" style="left:1611px;top:795px;width:1px;height:18px;background:#c3c3c3;"></div>
<div class="b" style="left:1721px;top:795px;width:1px;height:18px;background:#c3c3c3;"></div>
<svg class="b" style="left:14px;top:799px" width="9" height="9" viewBox="0 0 9 9"><defs><linearGradient id="pbx" x1="0" y1="0" x2="0" y2="1"><stop offset="0" stop-color="#ffffff"/><stop offset="1" stop-color="#dedede"/></linearGradient></defs><rect x="0.5" y="0.5" width="8" height="8" rx="1" fill="url(#pbx)" stroke="#8a8a8a"/><path d="M2 4.5 H7" stroke="#2c3e8c" stroke-width="1"/><path d="M4.5 2 V7" stroke="#2c3e8c" stroke-width="1"/></svg>
<div class="t " style="left:185px;top:798px;font-size:11px;line-height:13px;color:#000;letter-spacing:0.103px;">Итого Монтажные работы</div>
<div class="t" style="left:710.1px;width:300px;text-align:right;top:798px;font-size:11px;line-height:13px;color:#000;letter-spacing:0.1px;">46 293</div>
<div class="t" style="left:1130.1px;width:300px;text-align:right;top:798px;font-size:11px;line-height:13px;color:#000;letter-spacing:0.1px;">66,59</div>
<div class="t" style="left:1250.1px;width:300px;text-align:right;top:798px;font-size:11px;line-height:13px;color:#000;letter-spacing:0.1px;">18,79</div>
<div class="b" style="left:0px;top:813px;width:1722px;height:18px;background:#fffff0;"></div>
<div class="b" style="left:0px;top:830px;width:1722px;height:1px;background:#c3c3c3;"></div>
<div class="b" style="left:171px;top:813px;width:1px;height:18px;background:#c3c3c3;"></div>
<div class="b" style="left:931px;top:813px;width:1px;height:18px;background:#c3c3c3;"></div>
<div class="b" style="left:1011px;top:813px;width:1px;height:18px;background:#c3c3c3;"></div>
<div class="b" style="left:1086px;top:813px;width:1px;height:18px;background:#c3c3c3;"></div>
<div class="b" style="left:1161px;top:813px;width:1px;height:18px;background:#c3c3c3;"></div>
<div class="b" style="left:1236px;top:813px;width:1px;height:18px;background:#c3c3c3;"></div>
<div class="b" style="left:1311px;top:813px;width:1px;height:18px;background:#c3c3c3;"></div>
<div class="b" style="left:1371px;top:813px;width:1px;height:18px;background:#c3c3c3;"></div>
<div class="b" style="left:1431px;top:813px;width:1px;height:18px;background:#c3c3c3;"></div>
<div class="b" style="left:1491px;top:813px;width:1px;height:18px;background:#c3c3c3;"></div>
<div class="b" style="left:1551px;top:813px;width:1px;height:18px;background:#c3c3c3;"></div>
<div class="b" style="left:1611px;top:813px;width:1px;height:18px;background:#c3c3c3;"></div>
<div class="b" style="left:1721px;top:813px;width:1px;height:18px;background:#c3c3c3;"></div>
<svg class="b" style="left:14px;top:817px" width="9" height="9" viewBox="0 0 9 9"><defs><linearGradient id="pbx" x1="0" y1="0" x2="0" y2="1"><stop offset="0" stop-color="#ffffff"/><stop offset="1" stop-color="#dedede"/></linearGradient></defs><rect x="0.5" y="0.5" width="8" height="8" rx="1" fill="url(#pbx)" stroke="#8a8a8a"/><path d="M2 4.5 H7" stroke="#2c3e8c" stroke-width="1"/><path d="M4.5 2 V7" stroke="#2c3e8c" stroke-width="1"/></svg>
<div class="t " style="left:185px;top:816px;font-size:11px;line-height:13px;color:#000;letter-spacing:0.073px;">Итого Оборудование</div>
<div class="t" style="left:710.1px;width:300px;text-align:right;top:816px;font-size:11px;line-height:13px;color:#000;letter-spacing:0.1px;">6 942</div>
<div class="b" style="left:0px;top:831px;width:1722px;height:18px;background:#fffff0;"></div>
<div class="b" style="left:0px;top:848px;width:1722px;height:1px;background:#c3c3c3;"></div>
<div class="b" style="left:171px;top:831px;width:1px;height:18px;background:#c3c3c3;"></div>
<div class="b" style="left:931px;top:831px;width:1px;height:18px;background:#c3c3c3;"></div>
<div class="b" style="left:1011px;top:831px;width:1px;height:18px;background:#c3c3c3;"></div>
<div class="b" style="left:1086px;top:831px;width:1px;height:18px;background:#c3c3c3;"></div>
<div class="b" style="left:1161px;top:831px;width:1px;height:18px;background:#c3c3c3;"></div>
<div class="b" style="left:1236px;top:831px;width:1px;height:18px;background:#c3c3c3;"></div>
<div class="b" style="left:1311px;top:831px;width:1px;height:18px;background:#c3c3c3;"></div>
<div class="b" style="left:1371px;top:831px;width:1px;height:18px;background:#c3c3c3;"></div>
<div class="b" style="left:1431px;top:831px;width:1px;height:18px;background:#c3c3c3;"></div>
<div class="b" style="left:1491px;top:831px;width:1px;height:18px;background:#c3c3c3;"></div>
<div class="b" style="left:1551px;top:831px;width:1px;height:18px;background:#c3c3c3;"></div>
<div class="b" style="left:1611px;top:831px;width:1px;height:18px;background:#c3c3c3;"></div>
<div class="b" style="left:1721px;top:831px;width:1px;height:18px;background:#c3c3c3;"></div>
<svg class="b" style="left:14px;top:835px" width="9" height="9" viewBox="0 0 9 9"><defs><linearGradient id="pbx" x1="0" y1="0" x2="0" y2="1"><stop offset="0" stop-color="#ffffff"/><stop offset="1" stop-color="#dedede"/></linearGradient></defs><rect x="0.5" y="0.5" width="8" height="8" rx="1" fill="url(#pbx)" stroke="#8a8a8a"/><path d="M2 4.5 H7" stroke="#2c3e8c" stroke-width="1"/><path d="M4.5 2 V7" stroke="#2c3e8c" stroke-width="1"/></svg>
<div class="t " style="left:185px;top:834px;font-size:11px;line-height:13px;color:#000;letter-spacing:0.128px;">Итого Прочие затраты</div>
<div class="t" style="left:710.1px;width:300px;text-align:right;top:834px;font-size:11px;line-height:13px;color:#000;letter-spacing:0.1px;">5 954</div>
<div class="t" style="left:1130.1px;width:300px;text-align:right;top:834px;font-size:11px;line-height:13px;color:#000;letter-spacing:0.1px;">13,4</div>
<div class="b" style="left:0px;top:849px;width:1722px;height:18px;background:#fffff0;"></div>
<div class="b" style="left:0px;top:866px;width:1722px;height:1px;background:#c3c3c3;"></div>
<div class="b" style="left:171px;top:849px;width:1px;height:18px;background:#c3c3c3;"></div>
<div class="b" style="left:931px;top:849px;width:1px;height:18px;background:#c3c3c3;"></div>
<div class="b" style="left:1011px;top:849px;width:1px;height:18px;background:#c3c3c3;"></div>
<div class="b" style="left:1086px;top:849px;width:1px;height:18px;background:#c3c3c3;"></div>
<div class="b" style="left:1161px;top:849px;width:1px;height:18px;background:#c3c3c3;"></div>
<div class="b" style="left:1236px;top:849px;width:1px;height:18px;background:#c3c3c3;"></div>
<div class="b" style="left:1311px;top:849px;width:1px;height:18px;background:#c3c3c3;"></div>
<div class="b" style="left:1371px;top:849px;width:1px;height:18px;background:#c3c3c3;"></div>
<div class="b" style="left:1431px;top:849px;width:1px;height:18px;background:#c3c3c3;"></div>
<div class="b" style="left:1491px;top:849px;width:1px;height:18px;background:#c3c3c3;"></div>
<div class="b" style="left:1551px;top:849px;width:1px;height:18px;background:#c3c3c3;"></div>
<div class="b" style="left:1611px;top:849px;width:1px;height:18px;background:#c3c3c3;"></div>
<div class="b" style="left:1721px;top:849px;width:1px;height:18px;background:#c3c3c3;"></div>
<svg class="b" style="left:14px;top:853px" width="9" height="9" viewBox="0 0 9 9"><defs><linearGradient id="pbx" x1="0" y1="0" x2="0" y2="1"><stop offset="0" stop-color="#ffffff"/><stop offset="1" stop-color="#dedede"/></linearGradient></defs><rect x="0.5" y="0.5" width="8" height="8" rx="1" fill="url(#pbx)" stroke="#8a8a8a"/><path d="M2 4.5 H7" stroke="#2c3e8c" stroke-width="1"/></svg>
<div class="t " style="left:185px;top:852px;font-size:11px;line-height:13px;color:#000;letter-spacing:0.289px;">Итого</div>
<div class="t" style="left:710.1px;width:300px;text-align:right;top:852px;font-size:11px;line-height:13px;color:#000;letter-spacing:0.1px;">59 189</div>
<div class="t" style="left:1130.1px;width:300px;text-align:right;top:852px;font-size:11px;line-height:13px;color:#000;letter-spacing:0.1px;">79,99</div>
<div class="t" style="left:1250.1px;width:300px;text-align:right;top:852px;font-size:11px;line-height:13px;color:#000;letter-spacing:0.1px;">18,79</div>
<div class="b" style="left:0px;top:867px;width:1722px;height:18px;background:#fffff0;"></div>
<div class="b" style="left:0px;top:884px;width:1722px;height:1px;background:#c3c3c3;"></div>
<div class="b" style="left:171px;top:867px;width:1px;height:18px;background:#c3c3c3;"></div>
<div class="b" style="left:931px;top:867px;width:1px;height:18px;background:#c3c3c3;"></div>
<div class="b" style="left:1011px;top:867px;width:1px;height:18px;background:#c3c3c3;"></div>
<div class="b" style="left:1086px;top:867px;width:1px;height:18px;background:#c3c3c3;"></div>
<div class="b" style="left:1161px;top:867px;width:1px;height:18px;background:#c3c3c3;"></div>
<div class="b" style="left:1236px;top:867px;width:1px;height:18px;background:#c3c3c3;"></div>
<div class="b" style="left:1311px;top:867px;width:1px;height:18px;background:#c3c3c3;"></div>
<div class="b" style="left:1371px;top:867px;width:1px;height:18px;background:#c3c3c3;"></div>
<div class="b" style="left:1431px;top:867px;width:1px;height:18px;background:#c3c3c3;"></div>
<div class="b" style="left:1491px;top:867px;width:1px;height:18px;background:#c3c3c3;"></div>
<div class="b" style="left:1551px;top:867px;width:1px;height:18px;background:#c3c3c3;"></div>
<div class="b" style="left:1611px;top:867px;width:1px;height:18px;background:#c3c3c3;"></div>
<div class="b" style="left:1721px;top:867px;width:1px;height:18px;background:#c3c3c3;"></div>
<div class="t " style="left:197px;top:870px;font-size:11px;line-height:13px;color:#0000ff;letter-spacing:-0.186px;">В том числе:</div>
<div class="b" style="left:0px;top:885px;width:1722px;height:18px;background:#fffff0;"></div>
<div class="b" style="left:0px;top:902px;width:1722px;height:1px;background:#c3c3c3;"></div>
<div class="b" style="left:171px;top:885px;width:1px;height:18px;background:#c3c3c3;"></div>
<div class="b" style="left:931px;top:885px;width:1px;height:18px;background:#c3c3c3;"></div>
<div class="b" style="left:1011px;top:885px;width:1px;height:18px;background:#c3c3c3;"></div>
<div class="b" style="left:1086px;top:885px;width:1px;height:18px;background:#c3c3c3;"></div>
<div class="b" style="left:1161px;top:885px;width:1px;height:18px;background:#c3c3c3;"></div>
<div class="b" style="left:1236px;top:885px;width:1px;height:18px;background:#c3c3c3;"></div>
<div class="b" style="left:1311px;top:885px;width:1px;height:18px;background:#c3c3c3;"></div>
<div class="b" style="left:1371px;top:885px;width:1px;height:18px;background:#c3c3c3;"></div>
<div class="b" style="left:1431px;top:885px;width:1px;height:18px;background:#c3c3c3;"></div>
<div class="b" style="left:1491px;top:885px;width:1px;height:18px;background:#c3c3c3;"></div>
<div class="b" style="left:1551px;top:885px;width:1px;height:18px;background:#c3c3c3;"></div>
<div class="b" style="left:1611px;top:885px;width:1px;height:18px;background:#c3c3c3;"></div>
<div class="b" style="left:1721px;top:885px;width:1px;height:18px;background:#c3c3c3;"></div>
<div class="t " style="left:203px;top:888px;font-size:11px;line-height:13px;color:#0000ff;letter-spacing:-0.084px;">Материалы</div>
<div class="t" style="left:710.1px;width:300px;text-align:right;top:888px;font-size:11px;line-height:13px;color:#0000ff;letter-spacing:0.1px;">9 496</div>
<div class="b" style="left:0px;top:903px;width:1722px;height:18px;background:#fffff0;"></div>
<div class="b" style="left:0px;top:920px;width:1722px;height:1px;background:#c3c3c3;"></div>
<div class="b" style="left:171px;top:903px;width:1px;height:18px;background:#c3c3c3;"></div>
<div class="b" style="left:931px;top:903px;width:1px;height:18px;background:#c3c3c3;"></div>
<div class="b" style="left:1011px;top:903px;width:1px;height:18px;background:#c3c3c3;"></div>
<div class="b" style="left:1086px;top:903px;width:1px;height:18px;background:#c3c3c3;"></div>
<div class="b" style="left:1161px;top:903px;width:1px;height:18px;background:#c3c3c3;"></div>
<div class="b" style="left:1236px;top:903px;width:1px;height:18px;background:#c3c3c3;"></div>
<div class="b" style="left:1311px;top:903px;width:1px;height:18px;background:#c3c3c3;"></div>
<div class="b" style="left:1371px;top:903px;width:1px;height:18px;background:#c3c3c3;"></div>
<div class="b" style="left:1431px;top:903px;width:1px;height:18px;background:#c3c3c3;"></div>
<div class="b" style="left:1491px;top:903px;width:1px;height:18px;background:#c3c3c3;"></div>
<div class="b" style="left:1551px;top:903px;width:1px;height:18px;background:#c3c3c3;"></div>
<div class="b" style="left:1611px;top:903px;width:1px;height:18px;background:#c3c3c3;"></div>
<div class="b" style="left:1721px;top:903px;width:1px;height:18px;background:#c3c3c3;"></div>
<div class="t " style="left:203px;top:906px;font-size:11px;line-height:13px;color:#0000ff;letter-spacing:-0.283px;">Машины и механизмы</div>
<div class="t" style="left:710.1px;width:300px;text-align:right;top:906px;font-size:11px;line-height:13px;color:#0000ff;letter-spacing:0.1px;">8 123</div>
<div class="b" style="left:0px;top:921px;width:1722px;height:18px;background:#fffff0;"></div>
<div class="b" style="left:0px;top:938px;width:1722px;height:1px;background:#c3c3c3;"></div>
<div class="b" style="left:171px;top:921px;width:1px;height:18px;background:#c3c3c3;"></div>
<div class="b" style="left:931px;top:921px;width:1px;height:18px;background:#c3c3c3;"></div>
<div class="b" style="left:1011px;top:921px;width:1px;height:18px;background:#c3c3c3;"></div>
<div class="b" style="left:1086px;top:921px;width:1px;height:18px;background:#c3c3c3;"></div>
<div class="b" style="left:1161px;top:921px;width:1px;height:18px;background:#c3c3c3;"></div>
<div class="b" style="left:1236px;top:921px;width:1px;height:18px;background:#c3c3c3;"></div>
<div class="b" style="left:1311px;top:921px;width:1px;height:18px;background:#c3c3c3;"></div>
<div class="b" style="left:1371px;top:921px;width:1px;height:18px;background:#c3c3c3;"></div>
<div class="b" style="left:1431px;top:921px;width:1px;height:18px;background:#c3c3c3;"></div>
<div class="b" style="left:1491px;top:921px;width:1px;height:18px;background:#c3c3c3;"></div>
<div class="b" style="left:1551px;top:921px;width:1px;height:18px;background:#c3c3c3;"></div>
<div class="b" style="left:1611px;top:921px;width:1px;height:18px;background:#c3c3c3;"></div>
<div class="b" style="left:1721px;top:921px;width:1px;height:18px;background:#c3c3c3;"></div>
<div class="t " style="left:203px;top:924px;font-size:11px;line-height:13px;color:#0000ff;letter-spacing:-0.445px;">ФОТ</div>
<div class="t" style="left:710.1px;width:300px;text-align:right;top:924px;font-size:11px;line-height:13px;color:#0000ff;letter-spacing:0.1px;">17 307</div>
<div class="b" style="left:0px;top:939px;width:1722px;height:18px;background:#fffff0;"></div>
<div class="b" style="left:0px;top:956px;width:1722px;height:1px;background:#c3c3c3;"></div>
<div class="b" style="left:171px;top:939px;width:1px;height:18px;background:#c3c3c3;"></div>
<div class="b" style="left:931px;top:939px;width:1px;height:18px;background:#c3c3c3;"></div>
<div class="b" style="left:1011px;top:939px;width:1px;height:18px;background:#c3c3c3;"></div>
<div class="b" style="left:1086px;top:939px;width:1px;height:18px;background:#c3c3c3;"></div>
<div class="b" style="left:1161px;top:939px;width:1px;height:18px;background:#c3c3c3;"></div>
<div class="b" style="left:1236px;top:939px;width:1px;height:18px;background:#c3c3c3;"></div>
<div class="b" style="left:1311px;top:939px;width:1px;height:18px;background:#c3c3c3;"></div>
<div class="b" style="left:1371px;top:939px;width:1px;height:18px;background:#c3c3c3;"></div>
<div class="b" style="left:1431px;top:939px;width:1px;height:18px;background:#c3c3c3;"></div>
<div class="b" style="left:1491px;top:939px;width:1px;height:18px;background:#c3c3c3;"></div>
<div class="b" style="left:1551px;top:939px;width:1px;height:18px;background:#c3c3c3;"></div>
<div class="b" style="left:1611px;top:939px;width:1px;height:18px;background:#c3c3c3;"></div>
<div class="b" style="left:1721px;top:939px;width:1px;height:18px;background:#c3c3c3;"></div>
<div class="t " style="left:203px;top:942px;font-size:11px;line-height:13px;color:#0000ff;letter-spacing:0.013px;">Оборудование</div>
<div class="t" style="left:710.1px;width:300px;text-align:right;top:942px;font-size:11px;line-height:13px;color:#0000ff;letter-spacing:0.1px;">6 942</div>
<div class="b" style="left:0px;top:957px;width:1722px;height:18px;background:#fffff0;"></div>
<div class="b" style="left:0px;top:974px;width:1722px;height:1px;background:#c3c3c3;"></div>
<div class="b" style="left:171px;top:957px;width:1px;height:18px;background:#c3c3c3;"></div>
<div class="b" style="left:931px;top:957px;width:1px;height:18px;background:#c3c3c3;"></div>
<div class="b" style="left:1011px;top:957px;width:1px;height:18px;background:#c3c3c3;"></div>
<div class="b" style="left:1086px;top:957px;width:1px;height:18px;background:#c3c3c3;"></div>
<div class="b" style="left:1161px;top:957px;width:1px;height:18px;background:#c3c3c3;"></div>
<div class="b" style="left:1236px;top:957px;width:1px;height:18px;background:#c3c3c3;"></div>
<div class="b" style="left:1311px;top:957px;width:1px;height:18px;background:#c3c3c3;"></div>
<div class="b" style="left:1371px;top:957px;width:1px;height:18px;background:#c3c3c3;"></div>
<div class="b" style="left:1431px;top:957px;width:1px;height:18px;background:#c3c3c3;"></div>
<div class="b" style="left:1491px;top:957px;width:1px;height:18px;background:#c3c3c3;"></div>
<div class="b" style="left:1551px;top:957px;width:1px;height:18px;background:#c3c3c3;"></div>
<div class="b" style="left:1611px;top:957px;width:1px;height:18px;background:#c3c3c3;"></div>
<div class="b" style="left:1721px;top:957px;width:1px;height:18px;background:#c3c3c3;"></div>
<div class="t " style="left:203px;top:960px;font-size:11px;line-height:13px;color:#0000ff;letter-spacing:0.032px;">Накладные расходы</div>
<div class="t" style="left:710.1px;width:300px;text-align:right;top:960px;font-size:11px;line-height:13px;color:#0000ff;letter-spacing:0.1px;">12 612</div>
<div class="b" style="left:0px;top:975px;width:1722px;height:18px;background:#fffff0;"></div>
<div class="b" style="left:0px;top:992px;width:1722px;height:1px;background:#c3c3c3;"></div>
<div class="b" style="left:171px;top:975px;width:1px;height:18px;background:#c3c3c3;"></div>
<div class="b" style="left:931px;top:975px;width:1px;height:18px;background:#c3c3c3;"></div>
<div class="b" style="left:1011px;top:975px;width:1px;height:18px;background:#c3c3c3;"></div>
<div class="b" style="left:1086px;top:975px;width:1px;height:18px;background:#c3c3c3;"></div>
<div class="b" style="left:1161px;top:975px;width:1px;height:18px;background:#c3c3c3;"></div>
<div class="b" style="left:1236px;top:975px;width:1px;height:18px;background:#c3c3c3;"></div>
<div class="b" style="left:1311px;top:975px;width:1px;height:18px;background:#c3c3c3;"></div>
<div class="b" style="left:1371px;top:975px;width:1px;height:18px;background:#c3c3c3;"></div>
<div class="b" style="left:1431px;top:975px;width:1px;height:18px;background:#c3c3c3;"></div>
<div class="b" style="left:1491px;top:975px;width:1px;height:18px;background:#c3c3c3;"></div>
<div class="b" style="left:1551px;top:975px;width:1px;height:18px;background:#c3c3c3;"></div>
<div class="b" style="left:1611px;top:975px;width:1px;height:18px;background:#c3c3c3;"></div>
<div class="b" style="left:1721px;top:975px;width:1px;height:18px;background:#c3c3c3;"></div>
<div class="t " style="left:203px;top:978px;font-size:11px;line-height:13px;color:#0000ff;letter-spacing:-0.15px;">Сметная прибыль</div>
<div class="t" style="left:710.1px;width:300px;text-align:right;top:978px;font-size:11px;line-height:13px;color:#0000ff;letter-spacing:0.1px;">8 184</div>
<div class="b" style="left:0px;top:993px;width:1722px;height:6px;background:#fffff0;"></div>
<div class="b" style="left:0px;top:998px;width:1722px;height:1px;background:#c3c3c3;"></div>
<div class="b" style="left:171px;top:993px;width:1px;height:6px;background:#c3c3c3;"></div>
<div class="b" style="left:931px;top:993px;width:1px;height:6px;background:#c3c3c3;"></div>
<div class="b" style="left:1011px;top:993px;width:1px;height:6px;background:#c3c3c3;"></div>
<div class="b" style="left:1086px;top:993px;width:1px;height:6px;background:#c3c3c3;"></div>
<div class="b" style="left:1161px;top:993px;width:1px;height:6px;background:#c3c3c3;"></div>
<div class="b" style="left:1236px;top:993px;width:1px;height:6px;background:#c3c3c3;"></div>
<div class="b" style="left:1311px;top:993px;width:1px;height:6px;background:#c3c3c3;"></div>
<div class="b" style="left:1371px;top:993px;width:1px;height:6px;background:#c3c3c3;"></div>
<div class="b" style="left:1431px;top:993px;width:1px;height:6px;background:#c3c3c3;"></div>
<div class="b" style="left:1491px;top:993px;width:1px;height:6px;background:#c3c3c3;"></div>
<div class="b" style="left:1551px;top:993px;width:1px;height:6px;background:#c3c3c3;"></div>
<div class="b" style="left:1611px;top:993px;width:1px;height:6px;background:#c3c3c3;"></div>
<div class="b" style="left:1721px;top:993px;width:1px;height:6px;background:#c3c3c3;"></div>
<div class="b" style="left:0px;top:998px;width:1722px;height:1px;background:#fffff0;"></div>
<div class="b" style="left:1904px;top:206px;width:16px;height:793px;background:#f0f0f0;border-left:1px solid #e3e3e3;"></div>
<svg class="b" style="left:1907px;top:211px" width="9" height="6" viewBox="0 0 9 6"><path d="M1 5 L4.5 1.5 L8 5 Z" fill="#3f3f3f"/></svg>
<div class="b" style="left:1904px;top:482px;width:15px;height:484px;border:1px solid #8e8e8e;border-radius:2px;background:linear-gradient(90deg,#f7f7f7,#ebebeb 45%,#d8d8d8 55%,#cdcdcd);"></div>
<svg class="b" style="left:1907px;top:720px" width="9" height="9" viewBox="0 0 9 9"><path d="M1 1 H8 M1 4 H8 M1 7 H8" stroke="#3a3a3a" stroke-width="1.2"/></svg>
<svg class="b" style="left:1908px;top:987px" width="9" height="6" viewBox="0 0 9 6"><path d="M0.5 0.5 L8 0.5 L4.25 4.5 Z" fill="#3f3f3f"/></svg>
<div class="b" style="left:0px;top:999px;width:1903px;height:16px;background:#ececec;"></div>
<svg class="b" style="left:5px;top:1002px" width="6" height="9" viewBox="0 0 6 9"><path d="M5 0.5 L1 4.5 L5 8.5 Z" fill="#333"/></svg>
<div class="b" style="left:18px;top:999px;width:115px;height:15px;border:1px solid #8e8e8e;border-radius:2px;background:linear-gradient(#f7f7f7,#ebebeb 45%,#d8d8d8 55%,#cdcdcd);"></div>
<svg class="b" style="left:70px;top:1002px" width="10" height="9" viewBox="0 0 10 9"><path d="M1.5 1 V8 M4.5 1 V8 M7.5 1 V8" stroke="#444" stroke-width="1.2"/></svg>
<svg class="b" style="left:1892px;top:1002px" width="6" height="9" viewBox="0 0 6 9"><path d="M0.5 0.5 L5 4.5 L0.5 8.5 Z" fill="#333"/></svg>
<div class="b" style="left:1903px;top:999px;width:17px;height:16px;background:#f0f0f0;"></div>
<div class="b" style="left:0px;top:1015px;width:1920px;height:25px;background:linear-gradient(#dfe9f6,#cddaea 50%,#b9cade);"></div>
<div class="b" style="left:0px;top:1015px;width:1920px;height:1px;background:#8da7c7;"></div>
<div class="b" style="left:0px;top:1016px;width:1920px;height:1px;background:#f1f6fc;"></div>
<div class="t " style="left:6px;top:1021px;font-size:12px;line-height:14px;color:#1e2f48;letter-spacing:-0.113px;">Ямало-Ненецкий АО (редакция 2009 г.)</div>
<div class="t " style="left:231px;top:1021px;font-size:12px;line-height:14px;color:#1e2f48;letter-spacing:0.117px;">Зона 4 - г.Коротчаево, г.Новый Уренгой</div>
<div class="b" style="left:460px;top:1018px;width:1px;height:20px;background:#aebfd4;"></div>
<div class="b" style="left:461px;top:1018px;width:1px;height:20px;background:#f4f8fc;"></div>
<div class="b" style="left:1289px;top:1018px;width:1px;height:20px;background:#aebfd4;"></div>
<div class="b" style="left:1290px;top:1018px;width:1px;height:20px;background:#f4f8fc;"></div>
<div class="b" style="left:1574px;top:1018px;width:1px;height:20px;background:#aebfd4;"></div>
<div class="b" style="left:1575px;top:1018px;width:1px;height:20px;background:#f4f8fc;"></div>
<div class="b" style="left:1821px;top:1018px;width:1px;height:20px;background:#aebfd4;"></div>
<div class="b" style="left:1822px;top:1018px;width:1px;height:20px;background:#f4f8fc;"></div>
<svg class="b" style="left:1298px;top:1021px" width="14" height="14" viewBox="0 0 14 14"><g shape-rendering="crispEdges"><rect x="0" y="0" width="14" height="14" fill="#52b546"/><rect x="1" y="1" width="12" height="6" fill="#92ec86"/><rect x="1" y="7" width="12" height="6" fill="#62d856"/></g></svg>
<div class="t " style="left:1316px;top:1021px;font-size:12px;line-height:14px;color:#1e2f48;letter-spacing:-0.097px;">Баз.-индексный расчет</div>
<svg class="b" style="left:1451px;top:1020px" width="16" height="15" viewBox="0 0 16 15"><g shape-rendering="crispEdges"><rect x="0" y="0" width="16" height="15" fill="#2c3c52"/><rect x="0" y="0" width="15" height="14" fill="#f6f8fc"/><rect x="0" y="0" width="16" height="3" fill="#4d78dc"/><rect x="1" y="1" width="14" height="1" fill="#8cacf4"/><path d="M4 3 V14 M8 3 V14 M12 3 V14 M0 6 H15 M0 9 H15 M0 12 H15" stroke="#c8d0dc" stroke-width="1"/></g><path d="M4.5 5 H11.5 L11.8 7 H11 L10.5 6.2 H7.2 L9.8 9 L7 12 H10.8 L11.3 11 H12 L11.6 13 H4.3 V12.4 L7.5 9 L4.5 5.6 Z" fill="#000"/></svg>
<div class="t " style="left:1470px;top:1021px;font-size:12px;line-height:14px;color:#1e2f48;letter-spacing:-0.321px;">Итого: 59 189,00р.</div>
<div class="b" style="left:1580px;top:1017px;width:22px;height:22px;border:1px solid #e3b04a;border-radius:3px;background:linear-gradient(#fdeaa8,#fbd56c);"></div>
<svg class="b" style="left:1584px;top:1020px" width="12" height="16" viewBox="0 0 12 16"><g shape-rendering="crispEdges"><rect x="0.5" y="0.5" width="11" height="15" fill="#fff" stroke="#a9b0b8"/><rect x="2" y="2" width="3" height="2" fill="#9aa3ad"/><rect x="2" y="6" width="8" height="7" fill="#9aa3ad"/><rect x="4" y="6" width="1" height="7" fill="#fff"/><rect x="7" y="6" width="1" height="7" fill="#fff"/><rect x="2" y="8" width="8" height="1" fill="#fff"/><rect x="2" y="10" width="8" height="1" fill="#fff"/></g></svg>
<svg class="b" style="left:1608px;top:1020px" width="12" height="16" viewBox="0 0 12 16"><g shape-rendering="crispEdges"><rect x="0.5" y="0.5" width="11" height="15" fill="#fff" stroke="#a9b0b8"/><rect x="2" y="2" width="3" height="2" fill="#9aa3ad"/><rect x="2" y="6" width="8" height="7" fill="#9aa3ad"/><rect x="4" y="6" width="1" height="7" fill="#fff"/><rect x="7" y="6" width="1" height="7" fill="#fff"/><rect x="2" y="8" width="8" height="1" fill="#fff"/><rect x="2" y="10" width="8" height="1" fill="#fff"/></g></svg>
<svg class="b" style="left:1632px;top:1020px" width="12" height="16" viewBox="0 0 12 16"><g shape-rendering="crispEdges"><rect x="0.5" y="0.5" width="11" height="15" fill="#fff" stroke="#a9b0b8"/><rect x="2" y="2" width="3" height="2" fill="#9aa3ad"/><rect x="2" y="6" width="8" height="7" fill="#9aa3ad"/><rect x="4" y="6" width="1" height="7" fill="#fff"/><rect x="7" y="6" width="1" height="7" fill="#fff"/><rect x="2" y="8" width="8" height="1" fill="#fff"/><rect x="2" y="10" width="8" height="1" fill="#fff"/></g></svg>
<svg class="b" style="left:1656px;top:1020px" width="12" height="16" viewBox="0 0 12 16"><g shape-rendering="crispEdges"><rect x="0.5" y="0.5" width="11" height="15" fill="#fff" stroke="#a9b0b8"/><rect x="2" y="2" width="3" height="2" fill="#9aa3ad"/><rect x="2" y="6" width="8" height="7" fill="#9aa3ad"/><rect x="4" y="6" width="1" height="7" fill="#fff"/><rect x="7" y="6" width="1" height="7" fill="#fff"/><rect x="2" y="8" width="8" height="1" fill="#fff"/><rect x="2" y="10" width="8" height="1" fill="#fff"/></g></svg>
<svg class="b" style="left:1680px;top:1020px" width="12" height="16" viewBox="0 0 12 16"><g shape-rendering="crispEdges"><rect x="0.5" y="0.5" width="11" height="15" fill="#fff" stroke="#a9b0b8"/><rect x="2" y="2" width="3" height="2" fill="#9aa3ad"/><rect x="2" y="6" width="8" height="7" fill="#9aa3ad"/><rect x="4" y="6" width="1" height="7" fill="#fff"/><rect x="7" y="6" width="1" height="7" fill="#fff"/><rect x="2" y="8" width="8" height="1" fill="#fff"/><rect x="2" y="10" width="8" height="1" fill="#fff"/></g></svg>
<svg class="b" style="left:1704px;top:1020px" width="12" height="16" viewBox="0 0 12 16"><g shape-rendering="crispEdges"><rect x="0.5" y="0.5" width="11" height="15" fill="#fff" stroke="#a9b0b8"/><rect x="2" y="2" width="3" height="2" fill="#9aa3ad"/><rect x="2" y="6" width="8" height="7" fill="#9aa3ad"/><rect x="4" y="6" width="1" height="7" fill="#fff"/><rect x="7" y="6" width="1" height="7" fill="#fff"/><rect x="2" y="8" width="8" height="1" fill="#fff"/><rect x="2" y="10" width="8" height="1" fill="#fff"/></g></svg>
<svg class="b" style="left:1728px;top:1020px" width="12" height="16" viewBox="0 0 12 16"><g shape-rendering="crispEdges"><rect x="0.5" y="0.5" width="11" height="15" fill="#fff" stroke="#a9b0b8"/><rect x="2" y="2" width="3" height="2" fill="#9aa3ad"/><rect x="2" y="6" width="8" height="7" fill="#9aa3ad"/><rect x="4" y="6" width="1" height="7" fill="#fff"/><rect x="7" y="6" width="1" height="7" fill="#fff"/><rect x="2" y="8" width="8" height="1" fill="#fff"/><rect x="2" y="10" width="8" height="1" fill="#fff"/></g></svg>
<svg class="b" style="left:1752px;top:1020px" width="12" height="16" viewBox="0 0 12 16"><g shape-rendering="crispEdges"><rect x="0.5" y="0.5" width="11" height="15" fill="#fff" stroke="#a9b0b8"/><rect x="2" y="2" width="3" height="2" fill="#9aa3ad"/><rect x="2" y="6" width="8" height="7" fill="#9aa3ad"/><rect x="4" y="6" width="1" height="7" fill="#fff"/><rect x="7" y="6" width="1" height="7" fill="#fff"/><rect x="2" y="8" width="8" height="1" fill="#fff"/><rect x="2" y="10" width="8" height="1" fill="#fff"/></g></svg>
<svg class="b" style="left:1776px;top:1020px" width="12" height="16" viewBox="0 0 12 16"><g shape-rendering="crispEdges"><rect x="0.5" y="0.5" width="11" height="15" fill="#fff" stroke="#a9b0b8"/><rect x="2" y="2" width="3" height="2" fill="#9aa3ad"/><rect x="2" y="6" width="8" height="7" fill="#9aa3ad"/><rect x="4" y="6" width="1" height="7" fill="#fff"/><rect x="7" y="6" width="1" height="7" fill="#fff"/><rect x="2" y="8" width="8" height="1" fill="#fff"/><rect x="2" y="10" width="8" height="1" fill="#fff"/></g></svg>
<svg class="b" style="left:1800px;top:1020px" width="12" height="16" viewBox="0 0 12 16"><g shape-rendering="crispEdges"><rect x="0.5" y="0.5" width="11" height="15" fill="#fff" stroke="#a9b0b8"/><rect x="2" y="2" width="3" height="2" fill="#9aa3ad"/><rect x="2" y="6" width="8" height="7" fill="#9aa3ad"/><rect x="4" y="6" width="1" height="7" fill="#fff"/><rect x="7" y="6" width="1" height="7" fill="#fff"/><rect x="2" y="8" width="8" height="1" fill="#fff"/><rect x="2" y="10" width="8" height="1" fill="#fff"/></g></svg>
<svg class="b" style="left:1606px;top:1029px" width="7" height="6" viewBox="0 0 7 6"><rect x="0.5" y="0.5" width="6" height="5" fill="#78aaf0" stroke="#4c86dc"/></svg>
<svg class="b" style="left:1630px;top:1027px" width="9" height="7" viewBox="0 0 9 7"><g shape-rendering="crispEdges"><rect x="0" y="0" width="9" height="2" fill="#fff"/><rect x="0" y="2" width="9" height="2.5" fill="#1b3fd0"/><rect x="0" y="4.5" width="9" height="2.5" fill="#e0141e"/></g></svg>
<svg class="b" style="left:1655px;top:1028px" width="10" height="7" viewBox="0 0 10 7"><g fill="none" stroke="#000" stroke-width="1.5"><path d="M0 0.75 H3.5 M1.75 0.75 V6.5"/><path d="M7 1 C4.2 0, 4.2 6.8, 7 6"/><path d="M7.2 0 V6.5 M9.6 0 V6.5 M7.2 3.3 H9.6"/></g></svg>
<svg class="b" style="left:1678px;top:1025px" width="13" height="13" viewBox="0 0 13 13"><rect x="4.5" y="0" width="7.5" height="9" fill="#3fa043"/><rect x="6" y="1.5" width="4" height="2" fill="#8fd48f"/><circle cx="3.5" cy="7.8" r="2.7" fill="#fff" stroke="#333" stroke-width="0.9"/><path d="M3.5 6.3 V7.9 H4.8" stroke="#333" stroke-width="0.6" fill="none"/></svg>
<svg class="b" style="left:1702px;top:1028px" width="9" height="7" viewBox="0 0 9 7"><g fill="none" stroke="#1a3aa8" stroke-width="1.5"><path d="M0.8 0 V7 M3.6 0 V7 M0.8 3.3 H3.6"/><path d="M5.5 7 V0.8 H7.3 C9 0.8, 9 3.8, 7.3 3.8 H5.5"/></g></svg>
<svg class="b" style="left:1725px;top:1026px" width="10" height="10" viewBox="0 0 10 10"><path d="M1 8 L6 2 L9 4 L4 9.5 Z" fill="#eef0f3" stroke="#8a929c" stroke-width="0.7"/></svg>
<svg class="b" style="left:1750px;top:1024px" width="10" height="11" viewBox="0 0 10 11"><g fill="#e8b417" stroke="#8a5f05" stroke-width="0.5"><ellipse cx="5" cy="3" rx="4" ry="1.5"/><ellipse cx="5" cy="5.5" rx="4" ry="1.5"/><ellipse cx="4.5" cy="8" rx="4" ry="1.5"/></g></svg>
<svg class="b" style="left:1773px;top:1025px" width="10" height="10" viewBox="0 0 10 10"><path d="M0.5 9.5 L3.5 6 L5.5 7.5 L9.5 2" fill="none" stroke="#e02020" stroke-width="1.3"/></svg>
<svg class="b" style="left:1798px;top:1027px" width="13" height="6" viewBox="0 0 13 6"><g shape-rendering="crispEdges"><rect x="0" y="2" width="13" height="4" fill="#1a2a50"/><rect x="1" y="0" width="1" height="4" fill="#1a2a50"/><rect x="2" y="2" width="1" height="2" fill="#fff"/><rect x="5" y="2" width="1" height="2" fill="#fff"/><rect x="8" y="2" width="1" height="2" fill="#fff"/><rect x="11" y="2" width="1" height="2" fill="#fff"/></g></svg>
<div class="t " style="left:1826px;top:1022px;font-size:11px;line-height:13px;color:#a8b3c0;letter-spacing:-1.523px;">CAPS</div>
<div class="t " style="left:1860px;top:1022px;font-size:11px;line-height:13px;color:#1e3a78;letter-spacing:-1.516px;">NUM</div>
<div class="t " style="left:1892px;top:1022px;font-size:11px;line-height:13px;color:#a8b3c0;letter-spacing:-1.781px;">SCRL</div>
<div class="b" style="left:0px;top:1040px;width:1920px;height:1px;background:#353d48;"></div>
<div class="b" style="left:0px;top:1041px;width:1920px;height:7px;background:linear-gradient(90deg,#6f8299 0px,#8196ae 50px,#a3bbd7 110px,#a8c0dc 300px,#a8c0dc 1500px,#93a8c2 1750px,#7f92aa 1900px);"></div>
<svg class="b" style="left:12px;top:1041px" width="30" height="8" viewBox="0 0 30 8"><ellipse cx="15" cy="10" rx="13" ry="9" fill="#7a9cc4" stroke="#1f3b63" stroke-width="1.4"/></svg>
<svg class="b" style="left:82px;top:1040px" width="22" height="8" viewBox="0 0 22 8"><path d="M2 8 C6 -1, 18 -2, 20 4" fill="none" stroke="#f0b417" stroke-width="2.2"/><path d="M4 8 C6 3, 12 2, 16 6" fill="none" stroke="#2a78d0" stroke-width="1.5"/></svg>
<div class="b" style="left:121px;top:1041px;width:52px;height:10px;border:1px solid #2a2f36;border-radius:3px;background:linear-gradient(90deg,#fbf4c0,#f5e680);"></div>
<div class="b" style="left:174px;top:1040px;width:1px;height:8px;background:#6a7d94;"></div>
<div class="b" style="left:176px;top:1040px;width:1px;height:8px;background:#6a7d94;"></div>
<div class="b" style="left:246px;top:1041px;width:55px;height:10px;border:1px solid #2f3a48;border-radius:3px;background:linear-gradient(#e6eef8,#c3d3e6);"></div>
<div class="b" style="left:307px;top:1041px;width:57px;height:10px;border:1px solid #2f3a48;border-radius:3px;background:linear-gradient(#e6eef8,#c3d3e6);"></div>
<div class="b" style="left:369px;top:1041px;width:57px;height:10px;border:1px solid #2f3a48;border-radius:3px;background:linear-gradient(#e6eef8,#c3d3e6);"></div>
<div class="b" style="left:431px;top:1041px;width:57px;height:10px;border:1px solid #2f3a48;border-radius:3px;background:linear-gradient(#e6eef8,#c3d3e6);"></div>
<div class="b" style="left:493px;top:1041px;width:57px;height:10px;border:1px solid #2f3a48;border-radius:3px;background:linear-gradient(#e6eef8,#c3d3e6);"></div>
<div class="b" style="left:555px;top:1041px;width:57px;height:10px;border:1px solid #2f3a48;border-radius:3px;background:linear-gradient(#e6eef8,#c3d3e6);"></div>
<svg class="b" style="left:266px;top:1042px" width="20" height="6" viewBox="0 0 20 6"><ellipse cx="10" cy="6" rx="8" ry="5" fill="#d83a2a"/></svg>
<svg class="b" style="left:330px;top:1042px" width="20" height="6" viewBox="0 0 20 6"><path d="M2 6 L18 1 L18 6 Z" fill="#2a7ad0"/></svg>
<svg class="b" style="left:392px;top:1041px" width="20" height="7" viewBox="0 0 20 7"><rect x="2" y="0" width="4" height="7" fill="#2850c8"/><rect x="8" y="0" width="4" height="7" fill="#d0d8e8"/><rect x="13" y="0" width="4" height="7" fill="#2850c8"/></svg>
<svg class="b" style="left:452px;top:1042px" width="20" height="6" viewBox="0 0 20 6"><path d="M2 6 L18 1 L18 6 Z" fill="#2a9a50"/></svg>
<svg class="b" style="left:513px;top:1041px" width="20" height="7" viewBox="0 0 20 7"><rect x="2" y="1" width="5" height="6" fill="#d84a2a"/><rect x="15" y="4" width="2" height="3" fill="#3a9a3a"/></svg>
<svg class="b" style="left:575px;top:1041px" width="20" height="7" viewBox="0 0 20 7"><rect x="2" y="1" width="5" height="6" fill="#d84a2a"/></svg>
<div class="b" style="left:1905px;top:1040px;width:15px;height:8px;border:1px solid #5a6a80;background:linear-gradient(#b8c8dc,#8a9cb4);"></div>
</body></html>
